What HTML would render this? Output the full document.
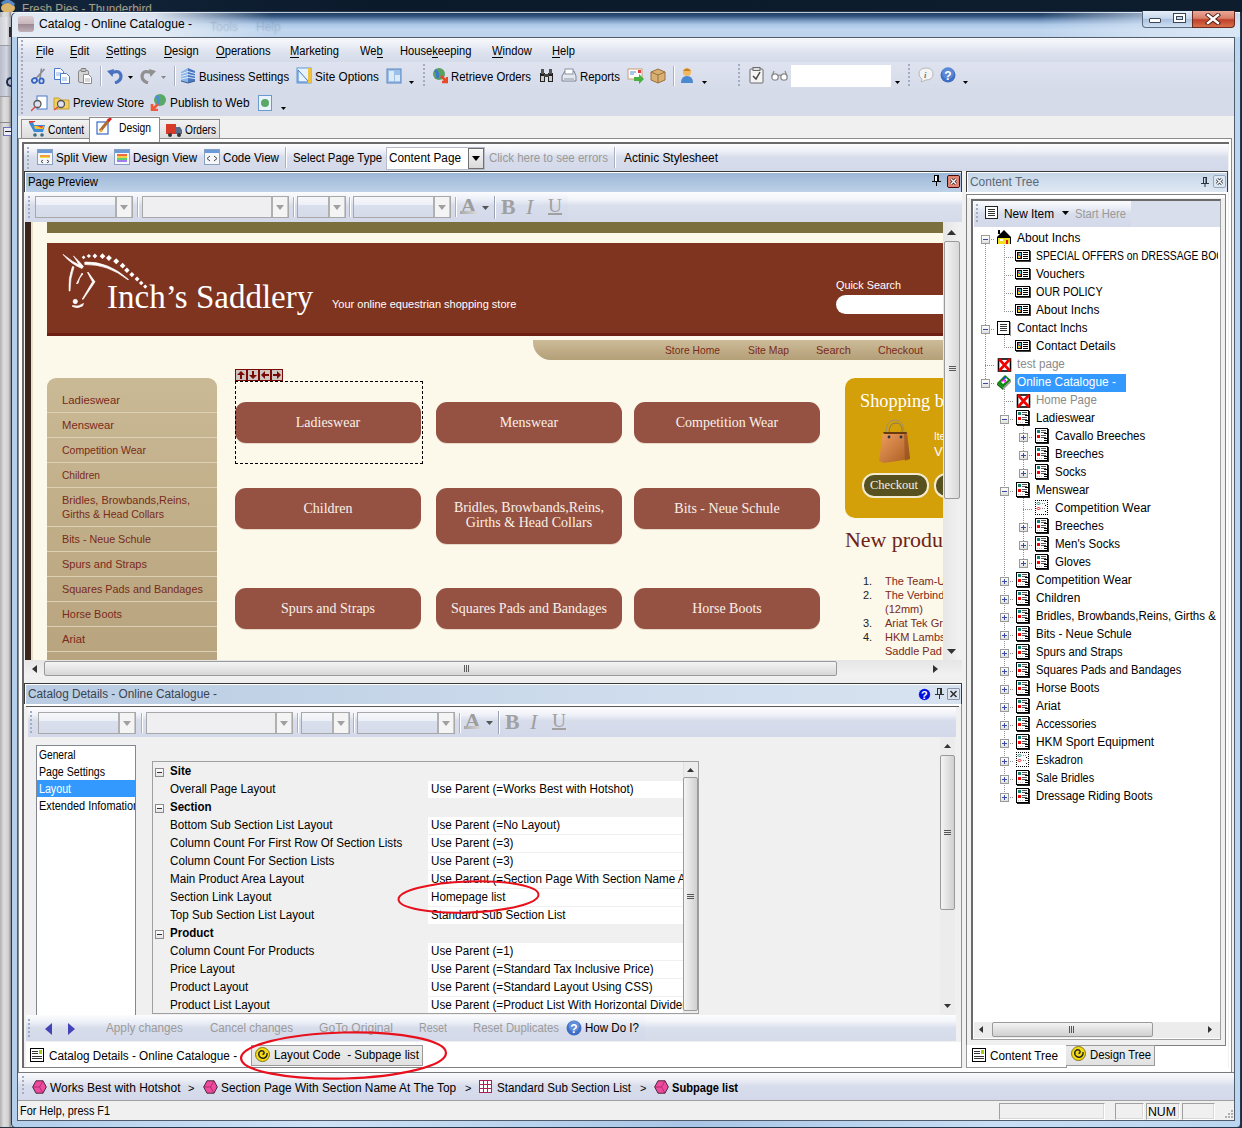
<!DOCTYPE html>
<html><head><meta charset="utf-8"><style>
*{margin:0;padding:0;box-sizing:border-box}
html,body{width:1242px;height:1128px;overflow:hidden}
body{position:relative;background:#cfd3d8;font-family:"Liberation Sans",sans-serif;font-size:12px;color:#000}
.a{position:absolute}
.t{position:absolute;white-space:nowrap;transform-origin:0 0}
.lav{background:linear-gradient(#fbfcfe 0,#eef1f8 20%,#dde2ef 45%,#d4d9ea 100%)}
.dock{background:#d6dbe9}
.cap{background:linear-gradient(#98b4d4 0,#a8c0dc 35%,#c0d3e8 100%)}
.capi{background:linear-gradient(#d4e0ee 0,#c9d8ea 50%,#dbe6f2 100%)}
.grip{background:repeating-linear-gradient(#9aa4b8 0 2px,transparent 2px 4px)}
</style></head><body>
<div class="a" style="left:0px;top:0px;width:1242px;height:12px;background:linear-gradient(90deg,#13263c,#0b1a2b 30%,#0d1c2d 70%,#0e1d2e)"></div>
<svg class="a" style="left:0px;top:0px;" width="16" height="13" viewBox="0 0 16 13"><ellipse cx="8" cy="8" rx="7" ry="5" fill="#d9b46a"/><path d="M2 4 Q8 -2 14 5" stroke="#5a8ac8" stroke-width="3" fill="none"/></svg>
<div class="t" style="left:22px;top:2px;font-size:13px;line-height:13px;font-family:'Liberation Sans',sans-serif;color:#a49c84;transform:scaleX(0.905);text-shadow:0 0 2px #2a3a4a">Fresh Pies - Thunderbird</div>
<div class="a" style="left:0px;top:12px;width:11px;height:1116px;background:linear-gradient(90deg,#b0b0b0 0,#dedede 35%,#d2d2d2 75%,#8a8a8a 100%)"></div>
<div class="a" style="left:0px;top:17px;width:11px;height:28px;background:linear-gradient(90deg,#cfd0d6,#e4e5ea 60%,#a8a9b0)"></div>
<div class="a" style="left:9px;top:27px;width:2px;height:10px;background:#2a2a30"></div>
<div class="a" style="left:0px;top:45px;width:11px;height:1px;background:#9a9aa0"></div>
<div class="a" style="left:0px;top:46px;width:11px;height:50px;background:linear-gradient(90deg,#b8bcc8,#d2d6e2 60%,#9ca0ac)"></div>
<div class="a" style="left:6px;top:77px;width:5px;height:10px;border:2px solid #1a2a50;border-right:none;border-radius:5px 0 0 5px"></div>
<div class="a" style="left:0px;top:96px;width:11px;height:1px;background:#9a9aa0"></div>
<div class="a" style="left:0px;top:122px;width:11px;height:1px;background:#8a8a8a"></div>
<div class="a" style="left:3px;top:127px;width:9px;height:9px;border:1px solid #7070c0;background:#ececf6"></div>
<div class="a" style="left:5px;top:131px;width:6px;height:1px;background:#222"></div>
<div class="a" style="left:1240px;top:12px;width:2px;height:1116px;background:#1e2b39"></div>
<div class="a" style="left:0px;top:1127px;width:1242px;height:1px;background:#2a3440"></div>
<div class="a" style="left:11px;top:11px;width:1230px;height:1117px;border-radius:7px 7px 4px 4px;background:linear-gradient(90deg,#b4cfec 0,#cfe3f6 25%,#a9c6e6 55%,#c9def4 80%,#bcd6f0 100%);border:1px solid #23384f"></div>
<div class="a" style="left:12px;top:12px;width:1228px;height:25px;border-radius:6px 6px 0 0;background:linear-gradient(#1c3a5e 0,#2e5078 16%,#7898c0 34%,#aac6e6 50%,#bcd4ee 72%,#b2cbe9 100%)"></div>
<div class="a" style="left:12px;top:12px;width:260px;height:25px;border-radius:6px 0 0 0;background:linear-gradient(90deg,rgba(226,234,244,1) 0,rgba(226,234,244,.95) 55%,rgba(226,234,244,0) 100%)"></div>
<div class="a" style="left:12px;top:24px;width:1228px;height:13px;background:linear-gradient(rgba(255,255,255,0),rgba(255,255,255,.15))"></div>
<div class="a" style="left:1040px;top:12px;width:200px;height:25px;background:linear-gradient(90deg,rgba(220,232,246,0) 0,rgba(220,232,246,.7) 60%,rgba(220,232,246,.9) 100%)"></div>
<div class="a" style="left:12px;top:12px;width:1228px;height:1px;background:rgba(255,255,255,.7)"></div>
<div class="t" style="left:210px;top:21px;font-size:12px;line-height:12px;font-family:'Liberation Sans',sans-serif;color:rgba(60,80,110,.07);text-shadow:0 0 2px rgba(60,80,110,.2)">Tools</div>
<div class="t" style="left:256px;top:21px;font-size:12px;line-height:12px;font-family:'Liberation Sans',sans-serif;color:rgba(60,80,110,.07);text-shadow:0 0 2px rgba(60,80,110,.2)">Help</div>
<div class="a" style="left:18px;top:16px;width:16px;height:16px;border-radius:3px;background:linear-gradient(#dcd0d4,#c8b6bc 50%,#9c8890 51%,#c0b0b8)"></div>
<div class="t" style="left:39px;top:18px;font-size:12px;line-height:12px;font-family:'Liberation Sans',sans-serif;color:#000;transform:scaleX(1.006);">Catalog - Online Catalogue -</div>
<div class="a" style="left:1142px;top:11px;width:25px;height:17px;border:1px solid #5a6a80;border-top:none;border-radius:0 0 0 4px;background:linear-gradient(#e6eef8,#c2d4ea 50%,#a9c0de 51%,#cfe0f2)"></div>
<div class="a" style="left:1149px;top:18px;width:12px;height:5px;background:#fff;border:1px solid #3a4656;border-radius:1px"></div>
<div class="a" style="left:1166px;top:11px;width:27px;height:17px;border:1px solid #5a6a80;border-top:none;border-left:none;background:linear-gradient(#e6eef8,#c2d4ea 50%,#a9c0de 51%,#cfe0f2)"></div>
<div class="a" style="left:1173px;top:13px;width:13px;height:10px;border:1px solid #3a4656;background:#fff;box-shadow:inset 0 0 0 2px #fff"></div>
<div class="a" style="left:1176px;top:16px;width:7px;height:4px;border:1px solid #3a4656;background:#c8d8ec"></div>
<div class="a" style="left:1192px;top:11px;width:43px;height:17px;border:1px solid #6a2a20;border-top:none;border-radius:0 0 4px 0;background:linear-gradient(#eaa898,#d8806a 45%,#c0402a 55%,#d8704a)"></div>
<svg class="a" style="left:1205px;top:13px;" width="16" height="12" viewBox="0 0 16 12"><path d="M3 2 L13 10 M13 2 L3 10" stroke="#4a1a10" stroke-width="4.2" stroke-linecap="square"/><path d="M3 2 L13 10 M13 2 L3 10" stroke="#fff" stroke-width="2.4" stroke-linecap="square"/></svg>
<div class="a" style="left:17px;top:37px;width:1218px;height:1084px;background:#f0f0f0;border:1px solid #4e5c6c"></div>
<div class="a" style="left:18px;top:38px;width:1216px;height:78px;background:#d6dbe9"></div>
<div class="a" style="left:18px;top:38px;width:1216px;height:3px;background:linear-gradient(#fbfbfd,#e6e9f2)"></div>
<div class="a" style="left:18px;top:40px;width:1216px;height:22px;background:linear-gradient(#f6f7fb,#dce1ee 60%,#d6dbe9)"></div>
<div class="a" style="left:21px;top:40px;width:2px;height:2px;background:#a3acc0"></div>
<div class="a" style="left:21px;top:44px;width:2px;height:2px;background:#a3acc0"></div>
<div class="a" style="left:21px;top:48px;width:2px;height:2px;background:#a3acc0"></div>
<div class="a" style="left:21px;top:52px;width:2px;height:2px;background:#a3acc0"></div>
<div class="a" style="left:21px;top:56px;width:2px;height:2px;background:#a3acc0"></div>
<div class="a" style="left:21px;top:60px;width:2px;height:2px;background:#a3acc0"></div>
<div class="a" style="left:21px;top:64px;width:2px;height:2px;background:#a3acc0"></div>
<div class="a" style="left:21px;top:68px;width:2px;height:2px;background:#a3acc0"></div>
<div class="a" style="left:21px;top:72px;width:2px;height:2px;background:#a3acc0"></div>
<div class="a" style="left:21px;top:76px;width:2px;height:2px;background:#a3acc0"></div>
<div class="a" style="left:21px;top:80px;width:2px;height:2px;background:#a3acc0"></div>
<div class="a" style="left:21px;top:84px;width:2px;height:2px;background:#a3acc0"></div>
<div class="a" style="left:21px;top:88px;width:2px;height:2px;background:#a3acc0"></div>
<div class="a" style="left:21px;top:92px;width:2px;height:2px;background:#a3acc0"></div>
<div class="a" style="left:21px;top:96px;width:2px;height:2px;background:#a3acc0"></div>
<div class="a" style="left:21px;top:100px;width:2px;height:2px;background:#a3acc0"></div>
<div class="a" style="left:21px;top:104px;width:2px;height:2px;background:#a3acc0"></div>
<div class="a" style="left:21px;top:108px;width:2px;height:2px;background:#a3acc0"></div>
<div class="a" style="left:21px;top:112px;width:2px;height:2px;background:#a3acc0"></div>
<div class="t" style="left:36px;top:45px;font-size:12px;line-height:12px;font-family:'Liberation Sans',sans-serif;color:#000;transform:scaleX(0.930);">File</div>
<div class="a" style="left:36px;top:57px;width:7px;height:1px;background:#000"></div>
<div class="t" style="left:70px;top:45px;font-size:12px;line-height:12px;font-family:'Liberation Sans',sans-serif;color:#000;transform:scaleX(0.930);">Edit</div>
<div class="a" style="left:70px;top:57px;width:7px;height:1px;background:#000"></div>
<div class="t" style="left:106px;top:45px;font-size:12px;line-height:12px;font-family:'Liberation Sans',sans-serif;color:#000;transform:scaleX(0.930);">Settings</div>
<div class="a" style="left:106px;top:57px;width:7px;height:1px;background:#000"></div>
<div class="t" style="left:164px;top:45px;font-size:12px;line-height:12px;font-family:'Liberation Sans',sans-serif;color:#000;transform:scaleX(0.930);">Design</div>
<div class="a" style="left:164px;top:57px;width:8px;height:1px;background:#000"></div>
<div class="t" style="left:216px;top:45px;font-size:12px;line-height:12px;font-family:'Liberation Sans',sans-serif;color:#000;transform:scaleX(0.930);">Operations</div>
<div class="a" style="left:216px;top:57px;width:9px;height:1px;background:#000"></div>
<div class="t" style="left:290px;top:45px;font-size:12px;line-height:12px;font-family:'Liberation Sans',sans-serif;color:#000;transform:scaleX(0.930);">Marketing</div>
<div class="a" style="left:290px;top:57px;width:9px;height:1px;background:#000"></div>
<div class="t" style="left:360px;top:45px;font-size:12px;line-height:12px;font-family:'Liberation Sans',sans-serif;color:#000;transform:scaleX(0.930);">Web</div>
<div class="a" style="left:377px;top:57px;width:6px;height:1px;background:#000"></div>
<div class="t" style="left:400px;top:45px;font-size:12px;line-height:12px;font-family:'Liberation Sans',sans-serif;color:#000;transform:scaleX(0.930);">Housekeeping</div>
<div class="a" style="left:432px;top:57px;width:6px;height:1px;background:#000"></div>
<div class="t" style="left:492px;top:45px;font-size:12px;line-height:12px;font-family:'Liberation Sans',sans-serif;color:#000;transform:scaleX(0.930);">Window</div>
<div class="a" style="left:492px;top:57px;width:11px;height:1px;background:#000"></div>
<div class="t" style="left:552px;top:45px;font-size:12px;line-height:12px;font-family:'Liberation Sans',sans-serif;color:#000;transform:scaleX(0.930);">Help</div>
<div class="a" style="left:552px;top:57px;width:8px;height:1px;background:#000"></div>
<div class="a" style="left:18px;top:62px;width:1216px;height:28px;background:linear-gradient(#dfe3f0,#d6dbe9)"></div>
<svg class="a" style="left:31px;top:68px;" width="15" height="16" viewBox="0 0 15 16"><path d="M5.5 10 L13.5 1 M9 10 L10.5 0.5" stroke="#8a8a90" stroke-width="1.6"/><ellipse cx="3.5" cy="12.5" rx="2.6" ry="2.2" stroke="#3564c0" stroke-width="1.8" fill="none" transform="rotate(-30 3.5 12.5)"/><ellipse cx="10.5" cy="13" rx="2.2" ry="2.6" stroke="#3564c0" stroke-width="1.8" fill="none"/></svg>
<svg class="a" style="left:54px;top:68px;" width="16" height="16" viewBox="0 0 16 16"><path d="M.5 .5h6l3 3v8h-9z" fill="#fff" stroke="#4a7ac8"/><path d="M2 5h5M2 7h5" stroke="#8ab0e0"/><path d="M6.5 5.5h6l3 3v7h-9z" fill="#fff" stroke="#4a7ac8"/><path d="M8 10h5M8 12h5" stroke="#8ab0e0"/></svg>
<svg class="a" style="left:78px;top:68px;" width="15" height="16" viewBox="0 0 15 16"><rect x=".5" y="2.5" width="10" height="12" rx="1.5" fill="#d4d4d4" stroke="#8a8a8a"/><rect x="3" y=".5" width="5" height="3" rx="1" fill="#c4c4c4" stroke="#7a7a7a"/><path d="M5.5 6.5h5l3 3v6h-8z" fill="#fff" stroke="#8a8a8a"/><path d="M7 11h5M7 13h5" stroke="#b0b0b0"/></svg>
<div class="a" style="left:100px;top:66px;width:1px;height:20px;background:#a8b0c2;box-shadow:1px 0 #fff"></div>
<svg class="a" style="left:107px;top:68px;" width="16" height="16" viewBox="0 0 16 16"><path d="M4 5 Q13 1 14 8 Q14 13 8 15" stroke="#4a72c0" stroke-width="3.2" fill="none"/><path d="M0 3 L7 1 L5.5 9z" fill="#4a72c0"/></svg>
<svg class="a" style="left:128px;top:76px;" width="5" height="3" viewBox="0 0 5 3"><path d="M0 0h5l-2.5 3z" fill="#000"/></svg>
<svg class="a" style="left:140px;top:68px;" width="16" height="16" viewBox="0 0 16 16"><path d="M12 5 Q3 1 2 8 Q2 13 8 15" stroke="#909090" stroke-width="3.2" fill="none"/><path d="M16 3 L9 1 L10.5 9z" fill="#909090"/></svg>
<svg class="a" style="left:161px;top:76px;" width="5" height="3" viewBox="0 0 5 3"><path d="M0 0h5l-2.5 3z" fill="#888"/></svg>
<div class="a" style="left:174px;top:66px;width:1px;height:20px;background:#a8b0c2;box-shadow:1px 0 #fff"></div>
<svg class="a" style="left:180px;top:67px;" width="16" height="17" viewBox="0 0 16 17"><path d="M1 5 L8 1 L8 16 L1 14z" fill="#8ab4e8"/><path d="M8 1 L15 4 L15 14 L8 16z" fill="#4a78c0"/><path d="M1 7 L8 4.5 M1 9.5 L8 7.5 M1 12 L8 10.5 M8 4.5 L15 6.5 M8 7.5 L15 9 M8 10.5 L15 11.5" stroke="#e8f2fc" stroke-width=".9"/><path d="M1 14 L8 16 L15 14" stroke="#3a5a90" stroke-width="1" fill="none"/></svg>
<div class="t" style="left:199px;top:71px;font-size:12px;line-height:12px;font-family:'Liberation Sans',sans-serif;color:#000;transform:scaleX(0.944);">Business Settings</div>
<svg class="a" style="left:296px;top:67px;" width="16" height="17" viewBox="0 0 16 17"><rect x="1" y="1" width="14" height="15" fill="#e8f2fc" stroke="#5a9ad8"/><path d="M2 15 L2 3 L13 15z" fill="none" stroke="#3a7ac8"/><rect x="12" y="1" width="3" height="15" fill="#f0c040"/></svg>
<div class="t" style="left:315px;top:71px;font-size:12px;line-height:12px;font-family:'Liberation Sans',sans-serif;color:#000;transform:scaleX(0.979);">Site Options</div>
<svg class="a" style="left:386px;top:68px;" width="16" height="16" viewBox="0 0 16 16"><rect x="1" y="1" width="14" height="14" fill="#9cc0e8" stroke="#5a86c0"/><rect x="3" y="3" width="5" height="10" fill="#dceaf8"/><rect x="9" y="7" width="5" height="6" fill="#dceaf8"/></svg>
<svg class="a" style="left:409px;top:81px;" width="5" height="3" viewBox="0 0 5 3"><path d="M0 0h5l-2.5 3z" fill="#000"/></svg>
<div class="a" style="left:423px;top:64px;width:2px;height:2px;background:#a3acc0"></div>
<div class="a" style="left:423px;top:68px;width:2px;height:2px;background:#a3acc0"></div>
<div class="a" style="left:423px;top:72px;width:2px;height:2px;background:#a3acc0"></div>
<div class="a" style="left:423px;top:76px;width:2px;height:2px;background:#a3acc0"></div>
<div class="a" style="left:423px;top:80px;width:2px;height:2px;background:#a3acc0"></div>
<div class="a" style="left:423px;top:84px;width:2px;height:2px;background:#a3acc0"></div>
<svg class="a" style="left:432px;top:67px;" width="16" height="17" viewBox="0 0 16 17"><circle cx="7" cy="7" r="6" fill="#5aa060"/><path d="M3 3 Q7 6 5 11" stroke="#3a78c8" stroke-width="3" fill="none"/><path d="M9 9 L15 15 M15 10 V15 H10" stroke="#e84a28" stroke-width="2.5" fill="none"/></svg>
<div class="t" style="left:451px;top:71px;font-size:12px;line-height:12px;font-family:'Liberation Sans',sans-serif;color:#000;transform:scaleX(0.945);">Retrieve Orders</div>
<svg class="a" style="left:539px;top:68px;" width="15" height="15" viewBox="0 0 15 15"><rect x="1" y="5" width="5" height="9" fill="#222"/><rect x="9" y="5" width="5" height="9" fill="#222"/><rect x="2" y="1" width="3" height="5" fill="#555"/><rect x="10" y="1" width="3" height="5" fill="#555"/><rect x="5" y="6" width="5" height="3" fill="#444"/><rect x="2" y="8" width="3" height="5" fill="#ccc"/><rect x="10" y="8" width="3" height="5" fill="#ccc"/></svg>
<svg class="a" style="left:561px;top:68px;" width="16" height="16" viewBox="0 0 16 16"><path d="M1 8 L4 3 H13 L15 8 V13 H1z" fill="#e4e8ee" stroke="#7a8292"/><rect x="4" y="1" width="8" height="5" fill="#fff" stroke="#8a92a2"/><rect x="3" y="10" width="10" height="3" fill="#b8c0cc"/></svg>
<div class="t" style="left:580px;top:71px;font-size:12px;line-height:12px;font-family:'Liberation Sans',sans-serif;color:#000;transform:scaleX(0.952);">Reports</div>
<svg class="a" style="left:627px;top:67px;" width="17" height="17" viewBox="0 0 17 17"><rect x="1" y="2" width="14" height="10" fill="#fff" stroke="#c8a070"/><path d="M3 5h6M3 7h4" stroke="#5a8ad0"/><rect x="11" y="3" width="3" height="3" fill="#e04040"/><path d="M7 10h5v-3l5 5-5 5v-3H7z" fill="#4ab040"/></svg>
<svg class="a" style="left:650px;top:68px;" width="16" height="16" viewBox="0 0 16 16"><path d="M1 4 L8 1 L15 4 V12 L8 15 L1 12z" fill="#d8b070" stroke="#9a7040"/><path d="M1 4 L8 7 L15 4 M8 7 V15" stroke="#9a7040" fill="none"/></svg>
<div class="a" style="left:673px;top:66px;width:1px;height:20px;background:#a8b0c2;box-shadow:1px 0 #fff"></div>
<svg class="a" style="left:680px;top:67px;" width="14" height="17" viewBox="0 0 14 17"><circle cx="7" cy="5" r="4" fill="#f0b860"/><path d="M3 4 Q7 -1 11 4" fill="#c88020"/><path d="M1 16 Q1 9 7 9 Q13 9 13 16z" fill="#4a88d0"/></svg>
<svg class="a" style="left:702px;top:81px;" width="5" height="3" viewBox="0 0 5 3"><path d="M0 0h5l-2.5 3z" fill="#000"/></svg>
<div class="a" style="left:738px;top:64px;width:2px;height:2px;background:#a3acc0"></div>
<div class="a" style="left:738px;top:68px;width:2px;height:2px;background:#a3acc0"></div>
<div class="a" style="left:738px;top:72px;width:2px;height:2px;background:#a3acc0"></div>
<div class="a" style="left:738px;top:76px;width:2px;height:2px;background:#a3acc0"></div>
<div class="a" style="left:738px;top:80px;width:2px;height:2px;background:#a3acc0"></div>
<div class="a" style="left:738px;top:84px;width:2px;height:2px;background:#a3acc0"></div>
<svg class="a" style="left:749px;top:67px;" width="15" height="17" viewBox="0 0 15 17"><rect x="1" y="2" width="13" height="14" rx="1" fill="#f4f4f4" stroke="#6a6a6a"/><rect x="4" y="0.5" width="7" height="3" fill="#ddd" stroke="#6a6a6a"/><path d="M4 9 L7 12 L11 5" stroke="#444" stroke-width="1.5" fill="none"/></svg>
<svg class="a" style="left:771px;top:70px;" width="17" height="12" viewBox="0 0 17 12"><circle cx="4" cy="7" r="3.2" stroke="#8a8a8a" stroke-width="1.3" fill="#fff"/><circle cx="13" cy="7" r="3.2" stroke="#8a8a8a" stroke-width="1.3" fill="#fff"/><path d="M7 6 Q8.5 4 10 6 M1 6 L3 1 M16 6 L14 1" stroke="#8a8a8a" stroke-width="1.2" fill="none"/></svg>
<div class="a" style="left:791px;top:65px;width:100px;height:22px;background:#fff"></div>
<svg class="a" style="left:895px;top:81px;" width="5" height="3" viewBox="0 0 5 3"><path d="M0 0h5l-2.5 3z" fill="#000"/></svg>
<div class="a" style="left:908px;top:64px;width:2px;height:2px;background:#a3acc0"></div>
<div class="a" style="left:908px;top:68px;width:2px;height:2px;background:#a3acc0"></div>
<div class="a" style="left:908px;top:72px;width:2px;height:2px;background:#a3acc0"></div>
<div class="a" style="left:908px;top:76px;width:2px;height:2px;background:#a3acc0"></div>
<div class="a" style="left:908px;top:80px;width:2px;height:2px;background:#a3acc0"></div>
<div class="a" style="left:908px;top:84px;width:2px;height:2px;background:#a3acc0"></div>
<svg class="a" style="left:918px;top:67px;" width="16" height="16" viewBox="0 0 16 16"><path d="M8 1 Q15 1 15 7 Q15 13 8 13 L3 15 L4 12 Q1 10 1 7 Q1 1 8 1z" fill="#f4f4f4" stroke="#b8b8b8"/><text x="6" y="11" font-size="9" font-style="italic" font-weight="bold" fill="#777" font-family="Liberation Serif">i</text></svg>
<svg class="a" style="left:940px;top:67px;" width="16" height="16" viewBox="0 0 16 16"><circle cx="8" cy="8" r="7.5" fill="#3f6fc4"/><circle cx="8" cy="6" r="6" fill="#6f9ae0" opacity=".6"/><text x="4.3" y="12.5" font-size="12" font-weight="bold" fill="#fff" font-family="Liberation Sans">?</text></svg>
<svg class="a" style="left:963px;top:81px;" width="5" height="3" viewBox="0 0 5 3"><path d="M0 0h5l-2.5 3z" fill="#000"/></svg>
<div class="a" style="left:18px;top:90px;width:1216px;height:26px;background:#d6dbe9"></div>
<div class="a" style="left:21px;top:40px;width:2px;height:2px;background:#a3acc0"></div>
<div class="a" style="left:21px;top:44px;width:2px;height:2px;background:#a3acc0"></div>
<div class="a" style="left:21px;top:48px;width:2px;height:2px;background:#a3acc0"></div>
<div class="a" style="left:21px;top:52px;width:2px;height:2px;background:#a3acc0"></div>
<div class="a" style="left:21px;top:56px;width:2px;height:2px;background:#a3acc0"></div>
<div class="a" style="left:21px;top:60px;width:2px;height:2px;background:#a3acc0"></div>
<div class="a" style="left:21px;top:64px;width:2px;height:2px;background:#a3acc0"></div>
<div class="a" style="left:21px;top:68px;width:2px;height:2px;background:#a3acc0"></div>
<div class="a" style="left:21px;top:72px;width:2px;height:2px;background:#a3acc0"></div>
<div class="a" style="left:21px;top:76px;width:2px;height:2px;background:#a3acc0"></div>
<div class="a" style="left:21px;top:80px;width:2px;height:2px;background:#a3acc0"></div>
<div class="a" style="left:21px;top:84px;width:2px;height:2px;background:#a3acc0"></div>
<div class="a" style="left:21px;top:88px;width:2px;height:2px;background:#a3acc0"></div>
<div class="a" style="left:21px;top:92px;width:2px;height:2px;background:#a3acc0"></div>
<div class="a" style="left:21px;top:96px;width:2px;height:2px;background:#a3acc0"></div>
<div class="a" style="left:21px;top:100px;width:2px;height:2px;background:#a3acc0"></div>
<div class="a" style="left:21px;top:104px;width:2px;height:2px;background:#a3acc0"></div>
<div class="a" style="left:21px;top:108px;width:2px;height:2px;background:#a3acc0"></div>
<div class="a" style="left:21px;top:112px;width:2px;height:2px;background:#a3acc0"></div>
<svg class="a" style="left:31px;top:95px;" width="17" height="17" viewBox="0 0 17 17"><rect x="6" y="1" width="10" height="13" fill="#fff" stroke="#4a7ac8"/><circle cx="6.5" cy="9" r="3.5" fill="#e0e0f0" stroke="#555" stroke-width="1.3"/><path d="M4 12 L0 16" stroke="#e04a4a" stroke-width="1.5"/></svg>
<svg class="a" style="left:53px;top:94px;" width="17" height="17" viewBox="0 0 17 17"><path d="M1 4 H6 L8 6 H16 V15 H1z" fill="#f0d060" stroke="#c8a030"/><circle cx="8" cy="10" r="3.5" fill="#e0e0f0" stroke="#555" stroke-width="1.3"/><path d="M5 13 L1 16" stroke="#e04a4a" stroke-width="1.5"/></svg>
<div class="t" style="left:73px;top:97px;font-size:12px;line-height:12px;font-family:'Liberation Sans',sans-serif;color:#000;transform:scaleX(0.951);">Preview Store</div>
<svg class="a" style="left:150px;top:93px;" width="17" height="18" viewBox="0 0 17 18"><circle cx="10" cy="7" r="6" fill="#5aa868"/><path d="M6 3 Q10 6 8 12" stroke="#4a90d8" stroke-width="3" fill="none"/><path d="M8 11 L2 17 M2 11 V17 H8" stroke="#f05a3a" stroke-width="2.6" fill="none"/></svg>
<div class="t" style="left:170px;top:97px;font-size:12px;line-height:12px;font-family:'Liberation Sans',sans-serif;color:#000;transform:scaleX(0.988);">Publish to Web</div>
<svg class="a" style="left:258px;top:95px;" width="14" height="16" viewBox="0 0 14 16"><rect x="0.5" y="0.5" width="13" height="15" fill="#eaf2fb" stroke="#6a9ad0"/><circle cx="7" cy="8" r="4" fill="#5aa868"/></svg>
<svg class="a" style="left:281px;top:107px;" width="5" height="3" viewBox="0 0 5 3"><path d="M0 0h5l-2.5 3z" fill="#000"/></svg>
<div class="a" style="left:18px;top:116px;width:1216px;height:27px;background:#f0f0f0"></div>
<div class="a" style="left:18px;top:138px;width:1214px;height:935px;border:1px solid #8c8c8c;background:#fff"></div>
<div class="a" style="left:22px;top:142px;width:1207px;height:926px;background:#f0f0f0;border-top:2px solid #6a6a6a;border-left:2px solid #6a6a6a"></div>
<div class="a" style="left:21px;top:119px;width:69px;height:19px;background:linear-gradient(#f2f2f2,#dcdcdc);border:1px solid #8d8d8d;border-bottom:none"></div>
<svg class="a" style="left:28px;top:121px;" width="18" height="16" viewBox="0 0 18 16"><path d="M1 2 L5 1 L6 4 H17 L15 11 H6z" fill="#3a8ad8"/><path d="M6 5 H16 L15 8 H7z" fill="#f8c030"/><path d="M9 5 L15 5 L14 7z" fill="#e04040"/><circle cx="7" cy="14" r="1.8" fill="#3a6a80"/><circle cx="14" cy="14" r="1.8" fill="#3a6a80"/><path d="M1 1 L7 0" stroke="#e03030" stroke-width="2"/></svg>
<div class="t" style="left:48px;top:124px;font-size:12px;line-height:12px;font-family:'Liberation Sans',sans-serif;color:#000;transform:scaleX(0.857);">Content</div>
<div class="a" style="left:89px;top:117px;width:71px;height:25px;background:#fff;border:1px solid #8d8d8d;border-bottom:none"></div>
<svg class="a" style="left:96px;top:118px;" width="16" height="17" viewBox="0 0 16 17"><rect x="1" y="4" width="11" height="12" fill="#fff" stroke="#3a6ac8" stroke-width="1.2"/><path d="M4 13 L13 2" stroke="#b06a30" stroke-width="3"/><path d="M12 3 L15 0" stroke="#e02020" stroke-width="3"/><path d="M3 15 L5 11 L7 13z" fill="#f0b040"/></svg>
<div class="t" style="left:119px;top:122px;font-size:12px;line-height:12px;font-family:'Liberation Sans',sans-serif;color:#000;transform:scaleX(0.857);">Design</div>
<div class="a" style="left:160px;top:119px;width:60px;height:19px;background:linear-gradient(#f2f2f2,#dcdcdc);border:1px solid #8d8d8d;border-bottom:none;border-left:none"></div>
<svg class="a" style="left:165px;top:122px;" width="18" height="15" viewBox="0 0 18 15"><rect x="1" y="2" width="10" height="10" fill="#d83a2a"/><path d="M11 5 H15 L17 8 V12 H11z" fill="#5a6a8a"/><circle cx="5" cy="13" r="2" fill="#333"/><circle cx="14" cy="13" r="2" fill="#333"/></svg>
<div class="t" style="left:185px;top:124px;font-size:12px;line-height:12px;font-family:'Liberation Sans',sans-serif;color:#000;transform:scaleX(0.845);">Orders</div>
<div class="a" style="left:24px;top:144px;width:1204px;height:27px;background:linear-gradient(#fdfdfe 0,#eef1f8 25%,#d8ddec 50%,#d4d9ea 100%)"></div>
<div class="a" style="left:27px;top:147px;width:2px;height:2px;background:#a3acc0"></div>
<div class="a" style="left:27px;top:151px;width:2px;height:2px;background:#a3acc0"></div>
<div class="a" style="left:27px;top:155px;width:2px;height:2px;background:#a3acc0"></div>
<div class="a" style="left:27px;top:159px;width:2px;height:2px;background:#a3acc0"></div>
<div class="a" style="left:27px;top:163px;width:2px;height:2px;background:#a3acc0"></div>
<div class="a" style="left:27px;top:167px;width:2px;height:2px;background:#a3acc0"></div>
<svg class="a" style="left:37px;top:149px;" width="16" height="16" viewBox="0 0 16 16"><rect x="0.5" y="0.5" width="15" height="15" fill="#f4f6fa" stroke="#8aa0c0"/><rect x="1" y="1" width="14" height="3" fill="#6a9ad8"/><rect x="3" y="6" width="10" height="2" fill="#f0a040"/><rect x="3" y="8" width="10" height="1" fill="#f0e040"/><path d="M6 11 L4 12.5 L6 14 M10 11 L12 12.5 L10 14" stroke="#444" fill="none"/></svg>
<div class="t" style="left:56px;top:152px;font-size:12px;line-height:12px;font-family:'Liberation Sans',sans-serif;color:#000;transform:scaleX(0.972);">Split View</div>
<svg class="a" style="left:114px;top:149px;" width="16" height="16" viewBox="0 0 16 16"><rect x="0.5" y="0.5" width="15" height="15" fill="#f4f6fa" stroke="#8aa0c0"/><rect x="1" y="1" width="14" height="3" fill="#6a9ad8"/><rect x="3" y="5" width="10" height="2" fill="#f06a40"/><rect x="3" y="7" width="10" height="2" fill="#f0d040"/><rect x="3" y="9" width="10" height="2" fill="#60d070"/><rect x="3" y="11" width="10" height="2" fill="#a080f0"/></svg>
<div class="t" style="left:133px;top:152px;font-size:12px;line-height:12px;font-family:'Liberation Sans',sans-serif;color:#000;transform:scaleX(0.963);">Design View</div>
<svg class="a" style="left:204px;top:149px;" width="16" height="16" viewBox="0 0 16 16"><rect x="0.5" y="0.5" width="15" height="15" fill="#f4f6fa" stroke="#8aa0c0"/><rect x="1" y="1" width="14" height="3" fill="#6a9ad8"/><path d="M6 7 L3 9.5 L6 12 M10 7 L13 9.5 L10 12" stroke="#444" fill="none"/></svg>
<div class="t" style="left:223px;top:152px;font-size:12px;line-height:12px;font-family:'Liberation Sans',sans-serif;color:#000;transform:scaleX(0.969);">Code View</div>
<div class="a" style="left:285px;top:147px;width:1px;height:21px;background:#a8b0c2;box-shadow:1px 0 #fff"></div>
<div class="t" style="left:293px;top:152px;font-size:12px;line-height:12px;font-family:'Liberation Sans',sans-serif;color:#000;transform:scaleX(0.949);">Select Page Type</div>
<div class="a" style="left:386px;top:147px;width:99px;height:23px;background:#fff;border:1px solid #b8bcc8"></div>
<div class="t" style="left:389px;top:152px;font-size:12px;line-height:12px;font-family:'Liberation Sans',sans-serif;color:#000;transform:scaleX(0.981);">Content Page</div>
<div class="a" style="left:468px;top:148px;width:16px;height:21px;background:linear-gradient(#f8f8f8,#dadada);border:1px solid #707070"></div>
<svg class="a" style="left:472px;top:156px;" width="8" height="5" viewBox="0 0 8 5"><path d="M0 0h8l-4 5z" fill="#000"/></svg>
<div class="t" style="left:489px;top:152px;font-size:12px;line-height:12px;font-family:'Liberation Sans',sans-serif;color:#9a9a9a;transform:scaleX(0.959);">Click here to see errors</div>
<div class="a" style="left:614px;top:147px;width:1px;height:21px;background:#a8b0c2;box-shadow:1px 0 #fff"></div>
<div class="t" style="left:624px;top:152px;font-size:12px;line-height:12px;font-family:'Liberation Sans',sans-serif;color:#000;transform:scaleX(0.993);">Actinic Stylesheet</div>
<div class="a" style="left:24px;top:171px;width:938px;height:21px;background:linear-gradient(#9ab5d5 0,#a9c1dd 40%,#bdd1e7 100%);border:1px solid #3a3a3a;border-bottom:none;box-shadow:inset 1px 1px #fff"></div>
<div class="t" style="left:28px;top:176px;font-size:12px;line-height:12px;font-family:'Liberation Sans',sans-serif;color:#000;transform:scaleX(0.946);">Page Preview</div>
<svg class="a" style="left:932px;top:175px;" width="9" height="11" viewBox="0 0 9 11"><path d="M2 0h5v6h2v1H5v4H4V7H0V6h2z" fill="#000"/><rect x="3" y="1" width="2" height="5" fill="#fff"/></svg>
<div class="a" style="left:947px;top:175px;width:13px;height:13px;border:1px solid #4a0a0a;background:radial-gradient(#f8c8b8,#e07a68 70%,#f0a898);border-radius:2px"></div>
<svg class="a" style="left:949px;top:177px;" width="9" height="9" viewBox="0 0 9 9"><path d="M2 2l5 5M7 2l-5 5" stroke="#3a1a1a" stroke-width="3"/><path d="M2 2l5 5M7 2l-5 5" stroke="#fff" stroke-width="1.4"/></svg>
<div class="a" style="left:25px;top:192px;width:937px;height:30px;background:linear-gradient(#fdfdfe 0,#f2f4f9 25%,#dadfed 45%,#d6dbea 100%)"></div>
<div class="a" style="left:25px;top:192px;width:543px;height:30px;background:linear-gradient(#fbfcfe 0,#eceff7 25%,#d8ddec 45%,#d3d9ea 100%)"></div>
<div class="a" style="left:28px;top:196px;width:2px;height:2px;background:#a3acc0"></div>
<div class="a" style="left:28px;top:200px;width:2px;height:2px;background:#a3acc0"></div>
<div class="a" style="left:28px;top:204px;width:2px;height:2px;background:#a3acc0"></div>
<div class="a" style="left:28px;top:208px;width:2px;height:2px;background:#a3acc0"></div>
<div class="a" style="left:28px;top:212px;width:2px;height:2px;background:#a3acc0"></div>
<div class="a" style="left:28px;top:216px;width:2px;height:2px;background:#a3acc0"></div>
<div class="a" style="left:35px;top:196px;width:98px;height:22px;background:linear-gradient(#f6f7fb 0,#eef0f7 38%,#dadfed 42%,#d6dbea 100%);border:1px solid #a8a8a8"></div>
<div class="a" style="left:115px;top:197px;width:17px;height:20px;background:#f4f4f4;border-left:2px solid #b0b0b0;border-right:1px solid #c8c8c8"></div>
<svg class="a" style="left:120px;top:205px;" width="8" height="5" viewBox="0 0 8 5"><path d="M0 0h8l-4 5z" fill="#a0a0a0"/></svg>
<div class="a" style="left:137px;top:197px;width:1px;height:20px;background:#a8b0c2;box-shadow:1px 0 #fff"></div>
<div class="a" style="left:142px;top:196px;width:147px;height:22px;background:#efeff1;border:1px solid #a8a8a8"></div>
<div class="a" style="left:271px;top:197px;width:17px;height:20px;background:#f4f4f4;border-left:2px solid #b0b0b0;border-right:1px solid #c8c8c8"></div>
<svg class="a" style="left:276px;top:205px;" width="8" height="5" viewBox="0 0 8 5"><path d="M0 0h8l-4 5z" fill="#a0a0a0"/></svg>
<div class="a" style="left:293px;top:197px;width:1px;height:20px;background:#a8b0c2;box-shadow:1px 0 #fff"></div>
<div class="a" style="left:297px;top:196px;width:49px;height:22px;background:linear-gradient(#f6f7fb 0,#eef0f7 38%,#dadfed 42%,#d6dbea 100%);border:1px solid #a8a8a8"></div>
<div class="a" style="left:328px;top:197px;width:17px;height:20px;background:#f4f4f4;border-left:2px solid #b0b0b0;border-right:1px solid #c8c8c8"></div>
<svg class="a" style="left:333px;top:205px;" width="8" height="5" viewBox="0 0 8 5"><path d="M0 0h8l-4 5z" fill="#a0a0a0"/></svg>
<div class="a" style="left:349px;top:197px;width:1px;height:20px;background:#a8b0c2;box-shadow:1px 0 #fff"></div>
<div class="a" style="left:353px;top:196px;width:98px;height:22px;background:linear-gradient(#f6f7fb 0,#eef0f7 38%,#dadfed 42%,#d6dbea 100%);border:1px solid #a8a8a8"></div>
<div class="a" style="left:433px;top:197px;width:17px;height:20px;background:#f4f4f4;border-left:2px solid #b0b0b0;border-right:1px solid #c8c8c8"></div>
<svg class="a" style="left:438px;top:205px;" width="8" height="5" viewBox="0 0 8 5"><path d="M0 0h8l-4 5z" fill="#a0a0a0"/></svg>
<div class="a" style="left:455px;top:197px;width:1px;height:20px;background:#a8b0c2;box-shadow:1px 0 #fff"></div>
<div class="t" style="left:461px;top:197px;font-size:18px;line-height:18px;font-family:'Liberation Serif',serif;color:#9c9c9c;font-weight:bold;transform:scaleX(1.154);">A</div>
<div class="a" style="left:460px;top:211px;width:17px;height:3px;background:linear-gradient(90deg,#a8a8a8,#d8d8d8)"></div>
<svg class="a" style="left:482px;top:206px;" width="7" height="4" viewBox="0 0 7 4"><path d="M0 0h7l-3.5 4z" fill="#555"/></svg>
<div class="a" style="left:494px;top:196px;width:1px;height:23px;background:#9aa2b4;box-shadow:1px 0 #fff"></div>
<div class="t" style="left:501px;top:197px;font-size:20px;line-height:20px;font-family:'Liberation Serif',serif;color:#a0a0a0;font-weight:bold;transform:scaleX(1.087);">B</div>
<div class="t" style="left:526px;top:197px;font-size:20px;line-height:20px;font-family:'Liberation Serif',serif;color:#a0a0a0;transform:scaleX(1.100);font-style:italic">I</div>
<div class="t" style="left:548px;top:197px;font-size:18px;line-height:18px;font-family:'Liberation Serif',serif;color:#a0a0a0;transform:scaleX(1.077);">U</div>
<div class="a" style="left:548px;top:213px;width:14px;height:2px;background:#a0a0a0"></div>
<div class="a" style="left:25px;top:222px;width:918px;height:438px;background:#fcf8ea"></div>
<div class="a" style="left:25px;top:222px;width:6px;height:438px;background:#3a261c"></div>
<div class="a" style="left:31px;top:222px;width:2px;height:438px;background:#e8e0cc"></div>
<div class="a" style="left:47px;top:222px;width:896px;height:11px;background:#7b6f3e"></div>
<div class="a" style="left:47px;top:243px;width:896px;height:93px;background:#7f3420;border-bottom:3px solid #6c1f12"></div>
<svg class="a" style="left:58px;top:250px;" width="95" height="62" viewBox="0 0 95 62"><g fill="#fff" stroke="#fff" stroke-width=".7" stroke-linejoin="round"><path d="M5 4.4 Q14 12 25 17 L24 18.5 Q13 14 5 4.4z"/><path d="M15.5 6 Q20 10 25.5 16.5 L22 16.5 Q19 11 15.5 6z"/><path d="M26.8 12 Q50 11 70.5 29.5 L69.5 29.5 Q50 14 26.8 14.5z"/><path d="M14.5 16.5 Q10 28 11.1 41 L12 41 Q12 28 16 17z"/><path d="M24 23 L18.5 33.5 L20 33.5 L21.5 28.5 Q23 26 25 24z"/><path d="M30 22 L37 31.8 L25 49.5 L24.3 49 L34.5 31.8 L29.5 22.5z"/><circle cx="17.3" cy="51.5" r="2.2"/><path d="M14.5 55.5 Q20 57.5 25.5 53.5 L24.5 56 Q19 59 14.5 56.5z"/></g><g fill="#fff"><rect x="24.3" y="6.0" width="2.6" height="2.6" transform="rotate(45 25.6 7.3)"/><rect x="29.3" y="4.5" width="3.0" height="3.0" transform="rotate(45 30.8 6)"/><rect x="35.199999999999996" y="4.3" width="3.4" height="3.4" transform="rotate(45 36.9 6)"/><rect x="42.5" y="4.2" width="4.0" height="4.0" transform="rotate(45 44.5 6.2)"/><rect x="48.8" y="5.9" width="4.2" height="4.2" transform="rotate(45 50.9 8)"/><rect x="56.1" y="9.200000000000001" width="4.2" height="4.2" transform="rotate(45 58.2 11.3)"/><rect x="62.599999999999994" y="13.7" width="4.0" height="4.0" transform="rotate(45 64.6 15.7)"/><rect x="67.0" y="18.400000000000002" width="3.8" height="3.8" transform="rotate(45 68.9 20.3)"/><rect x="72.10000000000001" y="22.8" width="3.6" height="3.6" transform="rotate(45 73.9 24.6)"/><rect x="77.39999999999999" y="27.3" width="3.4" height="3.4" transform="rotate(45 79.1 29)"/><rect x="81.60000000000001" y="31.4" width="3.2" height="3.2" transform="rotate(45 83.2 33)"/><rect x="85.7" y="35.1" width="3.0" height="3.0" transform="rotate(45 87.2 36.6)"/></g></svg>
<div class="t" style="left:107px;top:281px;font-size:33px;line-height:33px;font-family:'Liberation Serif',serif;color:#fff;">Inch’s Saddlery</div>
<div class="t" style="left:332px;top:299px;font-size:11px;line-height:11px;font-family:'Liberation Sans',sans-serif;color:#fff;">Your online equestrian shopping store</div>
<div class="t" style="left:836px;top:280px;font-size:11px;line-height:11px;font-family:'Liberation Sans',sans-serif;color:#fff;transform:scaleX(0.984);">Quick Search</div>
<div class="a" style="left:836px;top:295px;width:107px;height:19px;background:#fff;border-radius:10px 0 0 10px"></div>
<div class="a" style="left:533px;top:340px;width:410px;height:20px;background:linear-gradient(#cdbb98,#b39f78);border-radius:0 0 0 18px"></div>
<div class="t" style="left:665px;top:345px;font-size:11px;line-height:11px;font-family:'Liberation Sans',sans-serif;color:#7a2a1a;transform:scaleX(0.937);">Store Home</div>
<div class="t" style="left:748px;top:345px;font-size:11px;line-height:11px;font-family:'Liberation Sans',sans-serif;color:#7a2a1a;transform:scaleX(0.944);">Site Map</div>
<div class="t" style="left:816px;top:345px;font-size:11px;line-height:11px;font-family:'Liberation Sans',sans-serif;color:#7a2a1a;">Search</div>
<div class="t" style="left:878px;top:345px;font-size:11px;line-height:11px;font-family:'Liberation Sans',sans-serif;color:#7a2a1a;transform:scaleX(0.968);">Checkout</div>
<div class="a" style="left:47px;top:378px;width:170px;height:282px;background:linear-gradient(#c9b994,#b8a47e);border-radius:9px 9px 0 0"></div>
<div class="a" style="left:47px;top:412px;width:170px;height:1px;background:#ddd0b4"></div>
<div class="a" style="left:47px;top:437px;width:170px;height:1px;background:#ddd0b4"></div>
<div class="a" style="left:47px;top:462px;width:170px;height:1px;background:#ddd0b4"></div>
<div class="a" style="left:47px;top:487px;width:170px;height:1px;background:#ddd0b4"></div>
<div class="a" style="left:47px;top:526px;width:170px;height:1px;background:#ddd0b4"></div>
<div class="a" style="left:47px;top:551px;width:170px;height:1px;background:#ddd0b4"></div>
<div class="a" style="left:47px;top:576px;width:170px;height:1px;background:#ddd0b4"></div>
<div class="a" style="left:47px;top:601px;width:170px;height:1px;background:#ddd0b4"></div>
<div class="a" style="left:47px;top:626px;width:170px;height:1px;background:#ddd0b4"></div>
<div class="a" style="left:47px;top:651px;width:170px;height:1px;background:#ddd0b4"></div>
<div class="t" style="left:62px;top:395px;font-size:11px;line-height:11px;font-family:'Liberation Sans',sans-serif;color:#7a2a1a;transform:scaleX(1.031);">Ladieswear</div>
<div class="t" style="left:62px;top:420px;font-size:11px;line-height:11px;font-family:'Liberation Sans',sans-serif;color:#7a2a1a;transform:scaleX(1.025);">Menswear</div>
<div class="t" style="left:62px;top:445px;font-size:11px;line-height:11px;font-family:'Liberation Sans',sans-serif;color:#7a2a1a;transform:scaleX(0.956);">Competition Wear</div>
<div class="t" style="left:62px;top:470px;font-size:11px;line-height:11px;font-family:'Liberation Sans',sans-serif;color:#7a2a1a;transform:scaleX(0.928);">Children</div>
<div class="t" style="left:62px;top:495px;font-size:11px;line-height:11px;font-family:'Liberation Sans',sans-serif;color:#7a2a1a;transform:scaleX(0.992);">Bridles, Browbands,Reins,</div>
<div class="t" style="left:62px;top:509px;font-size:11px;line-height:11px;font-family:'Liberation Sans',sans-serif;color:#7a2a1a;transform:scaleX(0.959);">Girths &amp; Head Collars</div>
<div class="t" style="left:62px;top:534px;font-size:11px;line-height:11px;font-family:'Liberation Sans',sans-serif;color:#7a2a1a;transform:scaleX(0.976);">Bits - Neue Schule</div>
<div class="t" style="left:62px;top:559px;font-size:11px;line-height:11px;font-family:'Liberation Sans',sans-serif;color:#7a2a1a;">Spurs and Straps</div>
<div class="t" style="left:62px;top:584px;font-size:11px;line-height:11px;font-family:'Liberation Sans',sans-serif;color:#7a2a1a;transform:scaleX(0.984);">Squares Pads and Bandages</div>
<div class="t" style="left:62px;top:609px;font-size:11px;line-height:11px;font-family:'Liberation Sans',sans-serif;color:#7a2a1a;transform:scaleX(0.991);">Horse Boots</div>
<div class="t" style="left:62px;top:634px;font-size:11px;line-height:11px;font-family:'Liberation Sans',sans-serif;color:#7a2a1a;transform:scaleX(1.017);">Ariat</div>
<div class="a" style="left:235px;top:402px;width:186px;height:41px;background:#955243;border-radius:11px;box-shadow:0 1px 0 #e8d8c8"></div>
<div class="t" style="left:295.734375px;top:416px;font-size:14px;line-height:14px;font-family:'Liberation Serif',serif;color:#fbf0e8;">Ladieswear</div>
<div class="a" style="left:436px;top:402px;width:186px;height:41px;background:#955243;border-radius:11px;box-shadow:0 1px 0 #e8d8c8"></div>
<div class="t" style="left:499.8359375px;top:416px;font-size:14px;line-height:14px;font-family:'Liberation Serif',serif;color:#fbf0e8;">Menswear</div>
<div class="a" style="left:634px;top:402px;width:186px;height:41px;background:#955243;border-radius:11px;box-shadow:0 1px 0 #e8d8c8"></div>
<div class="t" style="left:675.7734375px;top:416px;font-size:14px;line-height:14px;font-family:'Liberation Serif',serif;color:#fbf0e8;">Competition Wear</div>
<div class="a" style="left:235px;top:488px;width:186px;height:41px;background:#955243;border-radius:11px;box-shadow:0 1px 0 #e8d8c8"></div>
<div class="t" style="left:303.5px;top:502px;font-size:14px;line-height:14px;font-family:'Liberation Serif',serif;color:#fbf0e8;">Children</div>
<div class="a" style="left:436px;top:488px;width:186px;height:56px;background:#955243;border-radius:11px;box-shadow:0 1px 0 #e8d8c8"></div>
<div class="t" style="left:453.9296875px;top:501px;font-size:14px;line-height:14px;font-family:'Liberation Serif',serif;color:#fbf0e8;">Bridles, Browbands,Reins,</div>
<div class="t" style="left:465.8046875px;top:516px;font-size:14px;line-height:14px;font-family:'Liberation Serif',serif;color:#fbf0e8;">Girths &amp; Head Collars</div>
<div class="a" style="left:634px;top:488px;width:186px;height:41px;background:#955243;border-radius:11px;box-shadow:0 1px 0 #e8d8c8"></div>
<div class="t" style="left:674.3046875px;top:502px;font-size:14px;line-height:14px;font-family:'Liberation Serif',serif;color:#fbf0e8;">Bits - Neue Schule</div>
<div class="a" style="left:235px;top:588px;width:186px;height:41px;background:#955243;border-radius:11px;box-shadow:0 1px 0 #e8d8c8"></div>
<div class="t" style="left:280.9453125px;top:602px;font-size:14px;line-height:14px;font-family:'Liberation Serif',serif;color:#fbf0e8;">Spurs and Straps</div>
<div class="a" style="left:436px;top:588px;width:186px;height:41px;background:#955243;border-radius:11px;box-shadow:0 1px 0 #e8d8c8"></div>
<div class="t" style="left:451.0234375px;top:602px;font-size:14px;line-height:14px;font-family:'Liberation Serif',serif;color:#fbf0e8;">Squares Pads and Bandages</div>
<div class="a" style="left:634px;top:588px;width:186px;height:41px;background:#955243;border-radius:11px;box-shadow:0 1px 0 #e8d8c8"></div>
<div class="t" style="left:692.1875px;top:602px;font-size:14px;line-height:14px;font-family:'Liberation Serif',serif;color:#fbf0e8;">Horse Boots</div>
<div class="a" style="left:235px;top:381px;width:188px;height:83px;border:1px dashed #000"></div>
<div class="a" style="left:235px;top:369px;width:12px;height:12px;background:#cfc6c2;border:1px solid #7a0a05"></div>
<svg class="a" style="left:236px;top:370px;" width="10" height="10" viewBox="0 0 10 10"><path d="M5 1 L9 5 H6 V9 H4 V5 H1z" fill="#7a0a05"/></svg>
<div class="a" style="left:247px;top:369px;width:12px;height:12px;background:#cfc6c2;border:1px solid #7a0a05"></div>
<svg class="a" style="left:248px;top:370px;" width="10" height="10" viewBox="0 0 10 10"><path d="M5 9 L9 5 H6 V1 H4 V5 H1z" fill="#7a0a05"/></svg>
<div class="a" style="left:259px;top:369px;width:12px;height:12px;background:#cfc6c2;border:1px solid #7a0a05"></div>
<svg class="a" style="left:260px;top:370px;" width="10" height="10" viewBox="0 0 10 10"><path d="M1 5 L5 1 V4 H9 V6 H5 V9z" fill="#7a0a05"/></svg>
<div class="a" style="left:271px;top:369px;width:12px;height:12px;background:#cfc6c2;border:1px solid #7a0a05"></div>
<svg class="a" style="left:272px;top:370px;" width="10" height="10" viewBox="0 0 10 10"><path d="M9 5 L5 1 V4 H1 V6 H5 V9z" fill="#7a0a05"/></svg>
<div class="a" style="left:845px;top:378px;width:98px;height:140px;background:#d3a00a;border-radius:10px 0 0 10px"></div>
<div class="t" style="left:860px;top:391px;font-size:19px;line-height:19px;font-family:'Liberation Serif',serif;color:#fff;transform:scaleX(0.964);">Shopping b</div>
<svg class="a" style="left:876px;top:419px;" width="38" height="46" viewBox="0 0 38 46"><defs><linearGradient id="bg1" x1="0" y1="0" x2="1" y2="1"><stop offset="0" stop-color="#f0a060"/><stop offset="1" stop-color="#a85a20"/></linearGradient></defs><path d="M10 14 Q10 1 19 1 Q28 1 28 14" stroke="#9a9070" stroke-width="1" fill="none"/><path d="M13 14 Q13 4 20 4 Q27 4 26 14" stroke="#7a7060" stroke-width=".8" fill="none"/><path d="M7 13 H31 L34 40 L8 44 L3 42z" fill="url(#bg1)"/><path d="M31 13 L34 40 L29 42 L28 15z" fill="#8a4a18" opacity=".5"/><path d="M7 13 H31 L30 15 H8z" fill="#6a3a10"/><circle cx="13" cy="18" r="1.4" fill="#2a3040"/><circle cx="25" cy="18" r="1.4" fill="#2a3040"/></svg>
<div class="t" style="left:934px;top:432px;font-size:10px;line-height:10px;font-family:'Liberation Sans',sans-serif;color:#fff;">Ite</div>
<div class="t" style="left:934px;top:445px;font-size:13px;line-height:13px;font-family:'Liberation Sans',sans-serif;color:#fff;">V</div>
<div class="a" style="left:862px;top:473px;width:67px;height:25px;background:#57501f;border:2px solid #f4ecd0;border-radius:12px"></div>
<div class="t" style="left:870px;top:478px;font-size:13px;line-height:13px;font-family:'Liberation Serif',serif;color:#f4f0e0;transform:scaleX(0.964);">Checkout</div>
<div class="a" style="left:934px;top:473px;width:12px;height:25px;background:#57501f;border:2px solid #f4ecd0;border-radius:12px 0 0 12px"></div>
<div class="t" style="left:845px;top:530px;font-size:21px;line-height:21px;font-family:'Liberation Serif',serif;color:#6e2418;transform:scaleX(1.043);">New produ</div>
<div class="t" style="left:863px;top:576px;font-size:11px;line-height:11px;font-family:'Liberation Sans',sans-serif;color:#222;">1.</div>
<div class="t" style="left:885px;top:576px;font-size:11px;line-height:11px;font-family:'Liberation Sans',sans-serif;color:#7a2a1a;">The Team-U</div>
<div class="t" style="left:863px;top:590px;font-size:11px;line-height:11px;font-family:'Liberation Sans',sans-serif;color:#222;">2.</div>
<div class="t" style="left:885px;top:590px;font-size:11px;line-height:11px;font-family:'Liberation Sans',sans-serif;color:#7a2a1a;">The Verbind</div>
<div class="t" style="left:885px;top:604px;font-size:11px;line-height:11px;font-family:'Liberation Sans',sans-serif;color:#7a2a1a;">(12mm)</div>
<div class="t" style="left:863px;top:618px;font-size:11px;line-height:11px;font-family:'Liberation Sans',sans-serif;color:#222;">3.</div>
<div class="t" style="left:885px;top:618px;font-size:11px;line-height:11px;font-family:'Liberation Sans',sans-serif;color:#7a2a1a;">Ariat Tek Gr</div>
<div class="t" style="left:863px;top:632px;font-size:11px;line-height:11px;font-family:'Liberation Sans',sans-serif;color:#222;">4.</div>
<div class="t" style="left:885px;top:632px;font-size:11px;line-height:11px;font-family:'Liberation Sans',sans-serif;color:#7a2a1a;">HKM Lambs</div>
<div class="t" style="left:885px;top:646px;font-size:11px;line-height:11px;font-family:'Liberation Sans',sans-serif;color:#7a2a1a;">Saddle Pad</div>
<div class="a" style="left:943px;top:222px;width:18px;height:438px;background:linear-gradient(90deg,#e6e6e6,#f2f2f2)"></div>
<svg class="a" style="left:947px;top:230px;" width="9" height="5" viewBox="0 0 9 5"><path d="M0 5 L4.5 0 L9 5z" fill="#333"/></svg>
<div class="a" style="left:944px;top:241px;width:16px;height:258px;background:linear-gradient(90deg,#f4f4f4,#e6e6e6 50%,#d8d8d8);border:1px solid #9a9a9a;border-radius:2px"></div>
<div class="a" style="left:949px;top:366px;width:7px;height:1px;background:#5a5a5a"></div>
<div class="a" style="left:949px;top:368px;width:7px;height:1px;background:#5a5a5a"></div>
<div class="a" style="left:949px;top:370px;width:7px;height:1px;background:#5a5a5a"></div>
<svg class="a" style="left:947px;top:649px;" width="9" height="5" viewBox="0 0 9 5"><path d="M0 0 L4.5 5 L9 0z" fill="#333"/></svg>
<div class="a" style="left:25px;top:660px;width:937px;height:17px;background:linear-gradient(#e6e6e6,#f2f2f2)"></div>
<svg class="a" style="left:32px;top:665px;" width="5" height="8" viewBox="0 0 5 8"><path d="M5 0 L0 4 L5 8z" fill="#333"/></svg>
<div class="a" style="left:44px;top:661px;width:793px;height:15px;background:linear-gradient(#f4f4f4,#e6e6e6 50%,#d6d6d6);border:1px solid #9a9a9a;border-radius:2px"></div>
<div class="a" style="left:464px;top:665px;width:1px;height:7px;background:#5a5a5a"></div>
<div class="a" style="left:466px;top:665px;width:1px;height:7px;background:#5a5a5a"></div>
<div class="a" style="left:468px;top:665px;width:1px;height:7px;background:#5a5a5a"></div>
<svg class="a" style="left:933px;top:665px;" width="5" height="8" viewBox="0 0 5 8"><path d="M0 0 L5 4 L0 8z" fill="#333"/></svg>
<div class="a" style="left:24px;top:683px;width:938px;height:21px;background:linear-gradient(90deg,#b9cce2,#cddbec 60%,#d7e3f0);border:1px solid #3a3a3a;border-bottom:none;box-shadow:inset 1px 1px #fff"></div>
<div class="t" style="left:28px;top:688px;font-size:12px;line-height:12px;font-family:'Liberation Sans',sans-serif;color:#3a4350;transform:scaleX(0.984);">Catalog Details - Online Catalogue -</div>
<svg class="a" style="left:918px;top:688px;" width="13" height="13" viewBox="0 0 13 13"><circle cx="6.5" cy="6.5" r="6" fill="#0010e0" stroke="#fff" stroke-width=".6"/><text x="3" y="11" font-size="11" font-weight="bold" fill="#fff" font-family="Liberation Sans">?</text></svg>
<svg class="a" style="left:935px;top:688px;" width="9" height="11" viewBox="0 0 9 11"><path d="M2 0h5v6h2v1H5v4H4V7H0V6h2z" fill="#333"/><rect x="3" y="1" width="2" height="5" fill="#d0dcea"/></svg>
<div class="a" style="left:947px;top:688px;width:13px;height:12px;border:1px solid #8a96a8;background:#dde6f0;border-radius:1px"></div>
<svg class="a" style="left:949px;top:690px;" width="9" height="8" viewBox="0 0 9 8"><path d="M1.5 1l6 6M7.5 1l-6 6" stroke="#333" stroke-width="1.6"/></svg>
<div class="a" style="left:24px;top:704px;width:938px;height:364px;background:#f0f0f0;border-right:1px solid #909090;border-bottom:1px solid #808080"></div>
<div class="a" style="left:24px;top:704px;width:937px;height:2px;background:#fff"></div>
<div class="a" style="left:26px;top:706px;width:933px;height:1px;background:#5a5a5a"></div>
<div class="a" style="left:28px;top:707px;width:928px;height:30px;background:linear-gradient(#fdfdfe 0,#f0f2f8 25%,#d8ddec 45%,#d3d9ea 100%)"></div>
<div class="a" style="left:30px;top:711px;width:2px;height:2px;background:#a3acc0"></div>
<div class="a" style="left:30px;top:715px;width:2px;height:2px;background:#a3acc0"></div>
<div class="a" style="left:30px;top:719px;width:2px;height:2px;background:#a3acc0"></div>
<div class="a" style="left:30px;top:723px;width:2px;height:2px;background:#a3acc0"></div>
<div class="a" style="left:30px;top:727px;width:2px;height:2px;background:#a3acc0"></div>
<div class="a" style="left:30px;top:731px;width:2px;height:2px;background:#a3acc0"></div>
<div class="a" style="left:38px;top:712px;width:98px;height:22px;background:linear-gradient(#f6f7fb 0,#eef0f7 38%,#dadfed 42%,#d6dbea 100%);border:1px solid #a8a8a8"></div>
<div class="a" style="left:118px;top:713px;width:17px;height:20px;background:#f4f4f4;border-left:2px solid #b0b0b0;border-right:1px solid #c8c8c8"></div>
<svg class="a" style="left:123px;top:721px;" width="8" height="5" viewBox="0 0 8 5"><path d="M0 0h8l-4 5z" fill="#a0a0a0"/></svg>
<div class="a" style="left:141px;top:713px;width:1px;height:20px;background:#a8b0c2;box-shadow:1px 0 #fff"></div>
<div class="a" style="left:146px;top:712px;width:147px;height:22px;background:#efeff1;border:1px solid #a8a8a8"></div>
<div class="a" style="left:275px;top:713px;width:17px;height:20px;background:#f4f4f4;border-left:2px solid #b0b0b0;border-right:1px solid #c8c8c8"></div>
<svg class="a" style="left:280px;top:721px;" width="8" height="5" viewBox="0 0 8 5"><path d="M0 0h8l-4 5z" fill="#a0a0a0"/></svg>
<div class="a" style="left:297px;top:713px;width:1px;height:20px;background:#a8b0c2;box-shadow:1px 0 #fff"></div>
<div class="a" style="left:301px;top:712px;width:49px;height:22px;background:linear-gradient(#f6f7fb 0,#eef0f7 38%,#dadfed 42%,#d6dbea 100%);border:1px solid #a8a8a8"></div>
<div class="a" style="left:332px;top:713px;width:17px;height:20px;background:#f4f4f4;border-left:2px solid #b0b0b0;border-right:1px solid #c8c8c8"></div>
<svg class="a" style="left:337px;top:721px;" width="8" height="5" viewBox="0 0 8 5"><path d="M0 0h8l-4 5z" fill="#a0a0a0"/></svg>
<div class="a" style="left:353px;top:713px;width:1px;height:20px;background:#a8b0c2;box-shadow:1px 0 #fff"></div>
<div class="a" style="left:357px;top:712px;width:98px;height:22px;background:linear-gradient(#f6f7fb 0,#eef0f7 38%,#dadfed 42%,#d6dbea 100%);border:1px solid #a8a8a8"></div>
<div class="a" style="left:437px;top:713px;width:17px;height:20px;background:#f4f4f4;border-left:2px solid #b0b0b0;border-right:1px solid #c8c8c8"></div>
<svg class="a" style="left:442px;top:721px;" width="8" height="5" viewBox="0 0 8 5"><path d="M0 0h8l-4 5z" fill="#a0a0a0"/></svg>
<div class="a" style="left:459px;top:713px;width:1px;height:20px;background:#a8b0c2;box-shadow:1px 0 #fff"></div>
<div class="t" style="left:465px;top:712px;font-size:18px;line-height:18px;font-family:'Liberation Serif',serif;color:#9c9c9c;font-weight:bold;transform:scaleX(1.154);">A</div>
<div class="a" style="left:464px;top:726px;width:17px;height:3px;background:linear-gradient(90deg,#a8a8a8,#d8d8d8)"></div>
<svg class="a" style="left:486px;top:721px;" width="7" height="4" viewBox="0 0 7 4"><path d="M0 0h7l-3.5 4z" fill="#555"/></svg>
<div class="a" style="left:498px;top:711px;width:1px;height:23px;background:#9aa2b4;box-shadow:1px 0 #fff"></div>
<div class="t" style="left:505px;top:712px;font-size:20px;line-height:20px;font-family:'Liberation Serif',serif;color:#a0a0a0;font-weight:bold;transform:scaleX(1.087);">B</div>
<div class="t" style="left:530px;top:712px;font-size:20px;line-height:20px;font-family:'Liberation Serif',serif;color:#a0a0a0;transform:scaleX(1.100);font-style:italic">I</div>
<div class="t" style="left:552px;top:712px;font-size:18px;line-height:18px;font-family:'Liberation Serif',serif;color:#a0a0a0;transform:scaleX(1.077);">U</div>
<div class="a" style="left:552px;top:728px;width:14px;height:2px;background:#a0a0a0"></div>
<div class="a" style="left:36px;top:745px;width:100px;height:271px;background:#fff;border:1px solid #828790"></div>
<div class="t" style="left:39px;top:749px;font-size:12px;line-height:12px;font-family:'Liberation Sans',sans-serif;color:#000;transform:scaleX(0.853);">General</div>
<div class="t" style="left:39px;top:766px;font-size:12px;line-height:12px;font-family:'Liberation Sans',sans-serif;color:#000;transform:scaleX(0.884);">Page Settings</div>
<div class="a" style="left:37px;top:780px;width:98px;height:17px;background:#3399ff"></div>
<div class="t" style="left:39px;top:783px;font-size:12px;line-height:12px;font-family:'Liberation Sans',sans-serif;color:#fff;transform:scaleX(0.889);">Layout</div>
<div class="a" style="left:37px;top:798px;width:98px;height:16px;overflow:hidden">
<div class="t" style="left:2px;top:2px;font-size:12px;line-height:12px;font-family:'Liberation Sans',sans-serif;color:#000;transform:scaleX(0.910);">Extended Infomation</div>
</div>
<div class="a" style="left:152px;top:761px;width:547px;height:253px;background:#f0f0f0;border:1px solid #a0a0a0"></div>
<div class="a" style="left:153px;top:762px;width:530px;height:251px;overflow:hidden">
<div class="a" style="left:2px;top:6px;width:9px;height:9px;border:1px solid #8a8a8a;background:linear-gradient(#fff,#e4e4e4)"></div>
<div class="a" style="left:4px;top:10px;width:5px;height:1px;background:#333"></div>
<div class="t" style="left:17px;top:3px;font-size:12px;line-height:12px;font-family:'Liberation Sans',sans-serif;color:#000;font-weight:bold;transform:scaleX(0.960);">Site</div>
<div class="t" style="left:17px;top:21px;font-size:12px;line-height:12px;font-family:'Liberation Sans',sans-serif;color:#000;transform:scaleX(0.970);">Overall Page Layout</div>
<div class="a" style="left:275px;top:19px;width:255px;height:17px;background:#fff"></div>
<div class="t" style="left:278px;top:21px;font-size:12px;line-height:12px;font-family:'Liberation Sans',sans-serif;color:#000;transform:scaleX(0.970);">Use Parent (=Works Best with Hotshot)</div>
<div class="a" style="left:2px;top:42px;width:9px;height:9px;border:1px solid #8a8a8a;background:linear-gradient(#fff,#e4e4e4)"></div>
<div class="a" style="left:4px;top:46px;width:5px;height:1px;background:#333"></div>
<div class="t" style="left:17px;top:39px;font-size:12px;line-height:12px;font-family:'Liberation Sans',sans-serif;color:#000;font-weight:bold;transform:scaleX(0.960);">Section</div>
<div class="t" style="left:17px;top:57px;font-size:12px;line-height:12px;font-family:'Liberation Sans',sans-serif;color:#000;transform:scaleX(0.970);">Bottom Sub Section List Layout</div>
<div class="a" style="left:275px;top:55px;width:255px;height:17px;background:#fff"></div>
<div class="t" style="left:278px;top:57px;font-size:12px;line-height:12px;font-family:'Liberation Sans',sans-serif;color:#000;transform:scaleX(0.970);">Use Parent (=No Layout)</div>
<div class="t" style="left:17px;top:75px;font-size:12px;line-height:12px;font-family:'Liberation Sans',sans-serif;color:#000;transform:scaleX(0.970);">Column Count For First Row Of Section Lists</div>
<div class="a" style="left:275px;top:73px;width:255px;height:17px;background:#fff"></div>
<div class="t" style="left:278px;top:75px;font-size:12px;line-height:12px;font-family:'Liberation Sans',sans-serif;color:#000;transform:scaleX(0.970);">Use Parent (=3)</div>
<div class="t" style="left:17px;top:93px;font-size:12px;line-height:12px;font-family:'Liberation Sans',sans-serif;color:#000;transform:scaleX(0.970);">Column Count For Section Lists</div>
<div class="a" style="left:275px;top:91px;width:255px;height:17px;background:#fff"></div>
<div class="t" style="left:278px;top:93px;font-size:12px;line-height:12px;font-family:'Liberation Sans',sans-serif;color:#000;transform:scaleX(0.970);">Use Parent (=3)</div>
<div class="t" style="left:17px;top:111px;font-size:12px;line-height:12px;font-family:'Liberation Sans',sans-serif;color:#000;transform:scaleX(0.970);">Main Product Area Layout</div>
<div class="a" style="left:275px;top:109px;width:255px;height:17px;background:#fff"></div>
<div class="t" style="left:278px;top:111px;font-size:12px;line-height:12px;font-family:'Liberation Sans',sans-serif;color:#000;transform:scaleX(0.970);">Use Parent (=Section Page With Section Name At The Top)</div>
<div class="t" style="left:17px;top:129px;font-size:12px;line-height:12px;font-family:'Liberation Sans',sans-serif;color:#000;transform:scaleX(0.970);">Section Link Layout</div>
<div class="a" style="left:275px;top:127px;width:255px;height:17px;background:#fff"></div>
<div class="t" style="left:278px;top:129px;font-size:12px;line-height:12px;font-family:'Liberation Sans',sans-serif;color:#000;transform:scaleX(0.970);">Homepage list</div>
<div class="t" style="left:17px;top:147px;font-size:12px;line-height:12px;font-family:'Liberation Sans',sans-serif;color:#000;transform:scaleX(0.970);">Top Sub Section List Layout</div>
<div class="a" style="left:275px;top:145px;width:255px;height:17px;background:#fff"></div>
<div class="t" style="left:278px;top:147px;font-size:12px;line-height:12px;font-family:'Liberation Sans',sans-serif;color:#000;transform:scaleX(0.970);">Standard Sub Section List</div>
<div class="a" style="left:2px;top:168px;width:9px;height:9px;border:1px solid #8a8a8a;background:linear-gradient(#fff,#e4e4e4)"></div>
<div class="a" style="left:4px;top:172px;width:5px;height:1px;background:#333"></div>
<div class="t" style="left:17px;top:165px;font-size:12px;line-height:12px;font-family:'Liberation Sans',sans-serif;color:#000;font-weight:bold;transform:scaleX(0.960);">Product</div>
<div class="t" style="left:17px;top:183px;font-size:12px;line-height:12px;font-family:'Liberation Sans',sans-serif;color:#000;transform:scaleX(0.970);">Column Count For Products</div>
<div class="a" style="left:275px;top:181px;width:255px;height:17px;background:#fff"></div>
<div class="t" style="left:278px;top:183px;font-size:12px;line-height:12px;font-family:'Liberation Sans',sans-serif;color:#000;transform:scaleX(0.970);">Use Parent (=1)</div>
<div class="t" style="left:17px;top:201px;font-size:12px;line-height:12px;font-family:'Liberation Sans',sans-serif;color:#000;transform:scaleX(0.970);">Price Layout</div>
<div class="a" style="left:275px;top:199px;width:255px;height:17px;background:#fff"></div>
<div class="t" style="left:278px;top:201px;font-size:12px;line-height:12px;font-family:'Liberation Sans',sans-serif;color:#000;transform:scaleX(0.970);">Use Parent (=Standard Tax Inclusive Price)</div>
<div class="t" style="left:17px;top:219px;font-size:12px;line-height:12px;font-family:'Liberation Sans',sans-serif;color:#000;transform:scaleX(0.970);">Product Layout</div>
<div class="a" style="left:275px;top:217px;width:255px;height:17px;background:#fff"></div>
<div class="t" style="left:278px;top:219px;font-size:12px;line-height:12px;font-family:'Liberation Sans',sans-serif;color:#000;transform:scaleX(0.970);">Use Parent (=Standard Layout Using CSS)</div>
<div class="t" style="left:17px;top:237px;font-size:12px;line-height:12px;font-family:'Liberation Sans',sans-serif;color:#000;transform:scaleX(0.970);">Product List Layout</div>
<div class="a" style="left:275px;top:235px;width:255px;height:17px;background:#fff"></div>
<div class="t" style="left:278px;top:237px;font-size:12px;line-height:12px;font-family:'Liberation Sans',sans-serif;color:#000;transform:scaleX(0.970);">Use Parent (=Product List With Horizontal Dividers)</div>
</div>
<div class="a" style="left:683px;top:762px;width:15px;height:251px;background:#ececec;border-left:1px solid #e0e0e0"></div>
<svg class="a" style="left:687px;top:768px;" width="7" height="4" viewBox="0 0 7 4"><path d="M0 4 L3.5 0 L7 4z" fill="#333"/></svg>
<div class="a" style="left:683px;top:777px;width:15px;height:234px;background:linear-gradient(90deg,#f4f4f4,#e2e2e2 50%,#d0d0d0);border:1px solid #9a9a9a;border-radius:2px"></div>
<div class="a" style="left:687px;top:894px;width:7px;height:1px;background:#555"></div>
<div class="a" style="left:687px;top:896px;width:7px;height:1px;background:#555"></div>
<div class="a" style="left:687px;top:898px;width:7px;height:1px;background:#555"></div>
<div class="a" style="left:940px;top:737px;width:15px;height:278px;background:#ececec"></div>
<svg class="a" style="left:944px;top:744px;" width="7" height="4" viewBox="0 0 7 4"><path d="M0 4 L3.5 0 L7 4z" fill="#333"/></svg>
<div class="a" style="left:940px;top:755px;width:15px;height:155px;background:linear-gradient(90deg,#f4f4f4,#e2e2e2 50%,#d0d0d0);border:1px solid #9a9a9a;border-radius:2px"></div>
<div class="a" style="left:944px;top:830px;width:7px;height:1px;background:#555"></div>
<div class="a" style="left:944px;top:832px;width:7px;height:1px;background:#555"></div>
<div class="a" style="left:944px;top:834px;width:7px;height:1px;background:#555"></div>
<svg class="a" style="left:944px;top:1004px;" width="7" height="4" viewBox="0 0 7 4"><path d="M0 0 L3.5 4 L7 0z" fill="#333"/></svg>
<svg class="a" style="left:396px;top:879px;" width="146" height="36" viewBox="0 0 146 36"><ellipse cx="72.5" cy="18" rx="70" ry="15.5" fill="none" stroke="#e8101c" stroke-width="2" transform="rotate(-2 72.5 18)"/></svg>
<div class="a" style="left:26px;top:1015px;width:930px;height:26px;background:linear-gradient(#fdfdfe 0,#f2f4f9 25%,#dadfed 50%,#d6dbea 100%)"></div>
<div class="a" style="left:26px;top:1015px;width:619px;height:26px;background:linear-gradient(#fcfcfe 0,#eef1f8 25%,#d8ddec 50%,#d4d9ea 100%)"></div>
<div class="a" style="left:28px;top:1019px;width:2px;height:2px;background:#a3acc0"></div>
<div class="a" style="left:28px;top:1023px;width:2px;height:2px;background:#a3acc0"></div>
<div class="a" style="left:28px;top:1027px;width:2px;height:2px;background:#a3acc0"></div>
<div class="a" style="left:28px;top:1031px;width:2px;height:2px;background:#a3acc0"></div>
<div class="a" style="left:28px;top:1035px;width:2px;height:2px;background:#a3acc0"></div>
<svg class="a" style="left:45px;top:1023px;" width="7" height="12" viewBox="0 0 7 12"><path d="M7 0 V12 L0 6z" fill="#4444b8"/></svg>
<svg class="a" style="left:68px;top:1023px;" width="7" height="12" viewBox="0 0 7 12"><path d="M0 0 V12 L7 6z" fill="#4444b8"/></svg>
<div class="t" style="left:106px;top:1022px;font-size:12px;line-height:12px;font-family:'Liberation Sans',sans-serif;color:#9b9b9b;transform:scaleX(0.978);">Apply changes</div>
<div class="t" style="left:210px;top:1022px;font-size:12px;line-height:12px;font-family:'Liberation Sans',sans-serif;color:#9b9b9b;transform:scaleX(0.965);">Cancel changes</div>
<div class="t" style="left:319px;top:1022px;font-size:12px;line-height:12px;font-family:'Liberation Sans',sans-serif;color:#9b9b9b;transform:scaleX(1.009);">GoTo Original</div>
<div class="t" style="left:419px;top:1022px;font-size:12px;line-height:12px;font-family:'Liberation Sans',sans-serif;color:#9b9b9b;transform:scaleX(0.893);">Reset</div>
<div class="t" style="left:473px;top:1022px;font-size:12px;line-height:12px;font-family:'Liberation Sans',sans-serif;color:#9b9b9b;transform:scaleX(0.948);">Reset Duplicates</div>
<svg class="a" style="left:566px;top:1020px;" width="16" height="16" viewBox="0 0 16 16"><circle cx="8" cy="8" r="7.5" fill="#3f6fc4"/><circle cx="8" cy="6" r="5.5" fill="#7aa2e4" opacity=".6"/><text x="4.3" y="12.5" font-size="12" font-weight="bold" fill="#fff" font-family="Liberation Sans">?</text></svg>
<div class="t" style="left:585px;top:1022px;font-size:12px;line-height:12px;font-family:'Liberation Sans',sans-serif;color:#000;transform:scaleX(0.964);">How Do I?</div>
<div class="a" style="left:26px;top:1042px;width:935px;height:25px;background:#fff"></div>
<svg class="a" style="left:30px;top:1048px;" width="15" height="15" viewBox="0 0 15 15"><rect x=".5" y=".5" width="13" height="13" fill="#fff" stroke="#000"/><rect x="2" y="3" width="6" height="1" fill="#333"/><rect x="2" y="5" width="6" height="1" fill="#333"/><rect x="2" y="8" width="10" height="1" fill="#333"/><rect x="2" y="10" width="10" height="1" fill="#333"/><rect x="9" y="2" width="3" height="4" fill="#a0d010"/></svg>
<div class="t" style="left:49px;top:1050px;font-size:12px;line-height:12px;font-family:'Liberation Sans',sans-serif;color:#000;transform:scaleX(0.979);">Catalog Details - Online Catalogue -</div>
<div class="a" style="left:251px;top:1045px;width:172px;height:21px;background:linear-gradient(#ececec,#e2e2e2);border:1px solid #9a9a9a"></div>
<svg class="a" style="left:255px;top:1047px;" width="15" height="15" viewBox="0 0 15 15"><circle cx="7.5" cy="7.5" r="7" fill="#f4dc10" stroke="#6a5a00" stroke-width=".8"/><path d="M7.5 7.5 Q9.5 7 9 5 Q8 3 5.5 4 Q3 5.5 4 8.5 Q5.5 12 9.5 11 Q12.5 9.5 12 6" stroke="#222" stroke-width="1.4" fill="none"/></svg>
<div class="t" style="left:274px;top:1049px;font-size:12px;line-height:12px;font-family:'Liberation Sans',sans-serif;color:#000;transform:scaleX(0.979);">Layout Code  - Subpage list</div>
<div class="a" style="left:966px;top:171px;width:262px;height:21px;background:linear-gradient(#c4d4e6,#d2dfee 50%,#dfe8f3);border:1px solid #3a3a3a;border-bottom:none;box-shadow:inset 1px 1px #fff"></div>
<div class="t" style="left:970px;top:176px;font-size:12px;line-height:12px;font-family:'Liberation Sans',sans-serif;color:#5a6878;transform:scaleX(0.995);">Content Tree</div>
<svg class="a" style="left:1201px;top:177px;" width="8" height="10" viewBox="0 0 8 10"><path d="M2 0h4v6h2v1H4.5v3h-1V7H0V6h2z" fill="#2a3440"/><rect x="3" y="1" width="1.5" height="5" fill="#c8d8e8"/></svg>
<div class="a" style="left:1213px;top:175px;width:13px;height:13px;border:1px solid #98a8bc;background:#dde7f1;border-radius:2px"></div>
<svg class="a" style="left:1215px;top:177px;" width="9" height="9" viewBox="0 0 9 9"><path d="M2 2l5 5M7 2l-5 5" stroke="#2a3440" stroke-width="3"/><path d="M2 2l5 5M7 2l-5 5" stroke="#fff" stroke-width="1.4"/></svg>
<div class="a" style="left:966px;top:192px;width:262px;height:880px;background:#fff"></div>
<div class="a" style="left:966px;top:194px;width:260px;height:852px;background:#f0f0f0;border:1px solid #808080"></div>
<div class="a" style="left:967px;top:195px;width:258px;height:3px;background:#fff"></div>
<div class="a" style="left:971px;top:199px;width:250px;height:841px;background:#fff;border-top:2px solid #6a6a6a;border-left:2px solid #6a6a6a;border-right:1px solid #a0a0a0;border-bottom:1px solid #a0a0a0"></div>
<div class="a" style="left:974px;top:201px;width:246px;height:26px;background:#d9deec"></div>
<div class="a" style="left:974px;top:201px;width:157px;height:26px;background:linear-gradient(#fafbfd 0,#eceff7 25%,#d8ddec 50%,#d3d9ea 100%)"></div>
<div class="a" style="left:976px;top:204px;width:2px;height:2px;background:#a3acc0"></div>
<div class="a" style="left:976px;top:208px;width:2px;height:2px;background:#a3acc0"></div>
<div class="a" style="left:976px;top:212px;width:2px;height:2px;background:#a3acc0"></div>
<div class="a" style="left:976px;top:216px;width:2px;height:2px;background:#a3acc0"></div>
<div class="a" style="left:976px;top:220px;width:2px;height:2px;background:#a3acc0"></div>
<svg class="a" style="left:985px;top:206px;" width="14" height="13" viewBox="0 0 14 13"><rect x=".5" y=".5" width="12" height="12" fill="#fff" stroke="#222"/><path d="M3 3.5h7M3 5.5h7M3 7.5h7M3 9.5h7" stroke="#333"/></svg>
<div class="t" style="left:1004px;top:208px;font-size:12px;line-height:12px;font-family:'Liberation Sans',sans-serif;color:#000;transform:scaleX(0.987);">New Item</div>
<svg class="a" style="left:1062px;top:211px;" width="7" height="4" viewBox="0 0 7 4"><path d="M0 0h7l-3.5 4z" fill="#000"/></svg>
<div class="t" style="left:1075px;top:208px;font-size:12px;line-height:12px;font-family:'Liberation Sans',sans-serif;color:#9a9a9a;transform:scaleX(0.933);">Start Here</div>
<div class="a" style="left:974px;top:227px;width:244px;height:795px;overflow:hidden">
<div class="a" style="left:11px;top:17px;width:1px;height:140px;background:repeating-linear-gradient(#909090 0 1px,transparent 1px 2px)"></div>
<div class="a" style="left:30px;top:18px;width:1px;height:66px;background:repeating-linear-gradient(#909090 0 1px,transparent 1px 2px)"></div>
<div class="a" style="left:30px;top:108px;width:1px;height:12px;background:repeating-linear-gradient(#909090 0 1px,transparent 1px 2px)"></div>
<div class="a" style="left:30px;top:162px;width:1px;height:408px;background:repeating-linear-gradient(#909090 0 1px,transparent 1px 2px)"></div>
<div class="a" style="left:49px;top:197px;width:1px;height:49px;background:repeating-linear-gradient(#909090 0 1px,transparent 1px 2px)"></div>
<div class="a" style="left:49px;top:269px;width:1px;height:67px;background:repeating-linear-gradient(#909090 0 1px,transparent 1px 2px)"></div>
<div class="a" style="left:11px;top:12px;width:10px;height:1px;background:repeating-linear-gradient(90deg,#909090 0 1px,transparent 1px 2px)"></div>
<div class="a" style="left:7px;top:8px;width:9px;height:9px;border:1px solid #9a9a9a;background:linear-gradient(#fff,#e0e0e0)"></div>
<div class="a" style="left:9px;top:12px;width:5px;height:1px;background:#3a4aa0"></div>
<svg class="a" style="left:22px;top:3px;" width="16" height="15" viewBox="0 0 16 15"><path d="M1 7 L8 0 L15 7 V14 H1z" fill="#000"/><rect x="2" y="8" width="12" height="6" fill="#f0e020"/><rect x="4" y="9" width="3" height="2" fill="#fff"/><rect x="10" y="10" width="2" height="4" fill="#e02020"/><rect x="2" y="0" width="2" height="4" fill="#000"/></svg>
<div class="t" style="left:43px;top:5px;font-size:12px;line-height:12px;font-family:'Liberation Sans',sans-serif;color:#000;">About Inchs</div>
<div class="a" style="left:30px;top:30px;width:10px;height:1px;background:repeating-linear-gradient(90deg,#909090 0 1px,transparent 1px 2px)"></div>
<svg class="a" style="left:41px;top:23px;" width="16" height="12" viewBox="0 0 16 12"><rect x=".5" y=".5" width="14" height="10" fill="#fff" stroke="#000"/><rect x="15" y="1" width="1" height="11" fill="#444"/><rect x="1" y="11" width="15" height="1" fill="#444"/><rect x="2" y="2" width="5" height="7" fill="#000"/><rect x="3" y="3" width="3" height="5" fill="#30d8e8"/><path d="M3 3.5 L6 7.5" stroke="#e02020" stroke-width="1.2"/><rect x="3" y="6" width="2" height="2" fill="#f0e020"/><rect x="8" y="2" width="5" height="1" fill="#000"/><rect x="8" y="4" width="5" height="1" fill="#000"/><rect x="8" y="6" width="5" height="1" fill="#000"/><rect x="8" y="8" width="5" height="1" fill="#000"/></svg>
<div class="t" style="left:62px;top:23px;font-size:12px;line-height:12px;font-family:'Liberation Sans',sans-serif;color:#000;transform:scaleX(0.860);">SPECIAL OFFERS on DRESSAGE BOOTS</div>
<div class="a" style="left:30px;top:48px;width:10px;height:1px;background:repeating-linear-gradient(90deg,#909090 0 1px,transparent 1px 2px)"></div>
<svg class="a" style="left:41px;top:41px;" width="16" height="12" viewBox="0 0 16 12"><rect x=".5" y=".5" width="14" height="10" fill="#fff" stroke="#000"/><rect x="15" y="1" width="1" height="11" fill="#444"/><rect x="1" y="11" width="15" height="1" fill="#444"/><rect x="2" y="2" width="5" height="7" fill="#000"/><rect x="3" y="3" width="3" height="5" fill="#30d8e8"/><path d="M3 3.5 L6 7.5" stroke="#e02020" stroke-width="1.2"/><rect x="3" y="6" width="2" height="2" fill="#f0e020"/><rect x="8" y="2" width="5" height="1" fill="#000"/><rect x="8" y="4" width="5" height="1" fill="#000"/><rect x="8" y="6" width="5" height="1" fill="#000"/><rect x="8" y="8" width="5" height="1" fill="#000"/></svg>
<div class="t" style="left:62px;top:41px;font-size:12px;line-height:12px;font-family:'Liberation Sans',sans-serif;color:#000;transform:scaleX(0.970);">Vouchers</div>
<div class="a" style="left:30px;top:66px;width:10px;height:1px;background:repeating-linear-gradient(90deg,#909090 0 1px,transparent 1px 2px)"></div>
<svg class="a" style="left:41px;top:59px;" width="16" height="12" viewBox="0 0 16 12"><rect x=".5" y=".5" width="14" height="10" fill="#fff" stroke="#000"/><rect x="15" y="1" width="1" height="11" fill="#444"/><rect x="1" y="11" width="15" height="1" fill="#444"/><rect x="2" y="2" width="5" height="7" fill="#000"/><rect x="3" y="3" width="3" height="5" fill="#30d8e8"/><path d="M3 3.5 L6 7.5" stroke="#e02020" stroke-width="1.2"/><rect x="3" y="6" width="2" height="2" fill="#f0e020"/><rect x="8" y="2" width="5" height="1" fill="#000"/><rect x="8" y="4" width="5" height="1" fill="#000"/><rect x="8" y="6" width="5" height="1" fill="#000"/><rect x="8" y="8" width="5" height="1" fill="#000"/></svg>
<div class="t" style="left:62px;top:59px;font-size:12px;line-height:12px;font-family:'Liberation Sans',sans-serif;color:#000;transform:scaleX(0.900);">OUR POLICY</div>
<div class="a" style="left:30px;top:84px;width:10px;height:1px;background:repeating-linear-gradient(90deg,#909090 0 1px,transparent 1px 2px)"></div>
<svg class="a" style="left:41px;top:77px;" width="16" height="12" viewBox="0 0 16 12"><rect x=".5" y=".5" width="14" height="10" fill="#fff" stroke="#000"/><rect x="15" y="1" width="1" height="11" fill="#444"/><rect x="1" y="11" width="15" height="1" fill="#444"/><rect x="2" y="2" width="5" height="7" fill="#000"/><rect x="3" y="3" width="3" height="5" fill="#30d8e8"/><path d="M3 3.5 L6 7.5" stroke="#e02020" stroke-width="1.2"/><rect x="3" y="6" width="2" height="2" fill="#f0e020"/><rect x="8" y="2" width="5" height="1" fill="#000"/><rect x="8" y="4" width="5" height="1" fill="#000"/><rect x="8" y="6" width="5" height="1" fill="#000"/><rect x="8" y="8" width="5" height="1" fill="#000"/></svg>
<div class="t" style="left:62px;top:77px;font-size:12px;line-height:12px;font-family:'Liberation Sans',sans-serif;color:#000;">About Inchs</div>
<div class="a" style="left:11px;top:102px;width:10px;height:1px;background:repeating-linear-gradient(90deg,#909090 0 1px,transparent 1px 2px)"></div>
<div class="a" style="left:7px;top:98px;width:9px;height:9px;border:1px solid #9a9a9a;background:linear-gradient(#fff,#e0e0e0)"></div>
<div class="a" style="left:9px;top:102px;width:5px;height:1px;background:#3a4aa0"></div>
<svg class="a" style="left:23px;top:94px;" width="14" height="15" viewBox="0 0 14 15"><rect x=".5" y=".5" width="12" height="13" fill="#fff" stroke="#000"/><rect x="13" y="1" width="1" height="14" fill="#999"/><path d="M3 3.5h7M3 5.5h7M3 7.5h7M3 9.5h7" stroke="#333"/></svg>
<div class="t" style="left:43px;top:95px;font-size:12px;line-height:12px;font-family:'Liberation Sans',sans-serif;color:#000;transform:scaleX(0.960);">Contact Inchs</div>
<div class="a" style="left:30px;top:120px;width:10px;height:1px;background:repeating-linear-gradient(90deg,#909090 0 1px,transparent 1px 2px)"></div>
<svg class="a" style="left:41px;top:113px;" width="16" height="12" viewBox="0 0 16 12"><rect x=".5" y=".5" width="14" height="10" fill="#fff" stroke="#000"/><rect x="15" y="1" width="1" height="11" fill="#444"/><rect x="1" y="11" width="15" height="1" fill="#444"/><rect x="2" y="2" width="5" height="7" fill="#000"/><rect x="3" y="3" width="3" height="5" fill="#30d8e8"/><path d="M3 3.5 L6 7.5" stroke="#e02020" stroke-width="1.2"/><rect x="3" y="6" width="2" height="2" fill="#f0e020"/><rect x="8" y="2" width="5" height="1" fill="#000"/><rect x="8" y="4" width="5" height="1" fill="#000"/><rect x="8" y="6" width="5" height="1" fill="#000"/><rect x="8" y="8" width="5" height="1" fill="#000"/></svg>
<div class="t" style="left:62px;top:113px;font-size:12px;line-height:12px;font-family:'Liberation Sans',sans-serif;color:#000;transform:scaleX(0.977);">Contact Details</div>
<div class="a" style="left:11px;top:138px;width:10px;height:1px;background:repeating-linear-gradient(90deg,#909090 0 1px,transparent 1px 2px)"></div>
<svg class="a" style="left:23px;top:131px;" width="15" height="15" viewBox="0 0 15 15"><rect x="1.5" y="1" width="12" height="12" fill="#fff" stroke="#000" stroke-width="1.6"/><path d="M2 1 L13 13 M13 1 L2 13" stroke="#f00000" stroke-width="2.6"/></svg>
<div class="t" style="left:43px;top:131px;font-size:12px;line-height:12px;font-family:'Liberation Sans',sans-serif;color:#8a8a8a;transform:scaleX(0.969);">test page</div>
<div class="a" style="left:11px;top:156px;width:10px;height:1px;background:repeating-linear-gradient(90deg,#909090 0 1px,transparent 1px 2px)"></div>
<div class="a" style="left:7px;top:152px;width:9px;height:9px;border:1px solid #9a9a9a;background:linear-gradient(#fff,#e0e0e0)"></div>
<div class="a" style="left:9px;top:156px;width:5px;height:1px;background:#3a4aa0"></div>
<svg class="a" style="left:23px;top:148px;" width="15" height="16" viewBox="0 0 15 16"><path d="M0 8 L8 0 L14 5 L6 13z" fill="#108a10"/><path d="M0 8 L6 13 L6 15 L0 10z" fill="#0a6a0a"/><path d="M6 13 L14 5 L14 7 L6 15z" fill="#909090"/><path d="M4 7 L9 3 L11 5 L6 9z" fill="#fff"/><path d="M5 6.5 Q7 4 8.5 5.5 Q7 7 9 8" stroke="#f0f" stroke-width="1.2" fill="none"/><path d="M6 4 L9 2" stroke="#2040ff" stroke-width="1.6"/></svg>
<div class="a" style="left:41px;top:147px;width:111px;height:18px;background:#3399ff"></div>
<div class="t" style="left:43px;top:149px;font-size:12px;line-height:12px;font-family:'Liberation Sans',sans-serif;color:#fff;transform:scaleX(0.988);">Online Catalogue -</div>
<div class="a" style="left:30px;top:174px;width:10px;height:1px;background:repeating-linear-gradient(90deg,#909090 0 1px,transparent 1px 2px)"></div>
<svg class="a" style="left:42px;top:167px;" width="15" height="15" viewBox="0 0 15 15"><rect x="1.5" y="1" width="12" height="12" fill="#fff" stroke="#000" stroke-width="1.6"/><path d="M2 1 L13 13 M13 1 L2 13" stroke="#f00000" stroke-width="2.6"/></svg>
<div class="t" style="left:62px;top:167px;font-size:12px;line-height:12px;font-family:'Liberation Sans',sans-serif;color:#8a8a8a;transform:scaleX(0.960);">Home Page</div>
<div class="a" style="left:30px;top:192px;width:10px;height:1px;background:repeating-linear-gradient(90deg,#909090 0 1px,transparent 1px 2px)"></div>
<div class="a" style="left:26px;top:188px;width:9px;height:9px;border:1px solid #9a9a9a;background:linear-gradient(#fff,#e0e0e0)"></div>
<div class="a" style="left:28px;top:192px;width:5px;height:1px;background:#3a4aa0"></div>
<svg class="a" style="left:42px;top:183px;" width="14" height="16" viewBox="0 0 14 16"><rect x=".5" y=".5" width="12" height="14" fill="#fff" stroke="#000"/><rect x="13" y="1" width="1" height="15" fill="#222"/><rect x="1" y="15" width="13" height="1" fill="#222"/><rect x="2" y="2" width="3" height="3" fill="#108070"/><rect x="2" y="7" width="3" height="3" fill="#f00"/><path d="M6 2.5h5M6 4.5h5M6 7.5h5M6 9.5h5" stroke="#555" stroke-width="1"/><rect x="9" y="5" width="3" height="1" fill="#000"/><rect x="9" y="10" width="3" height="1" fill="#000"/><rect x="9" y="12" width="3" height="1" fill="#000"/><path d="M2 12.5h6" stroke="#bbb" stroke-dasharray="1 1"/></svg>
<div class="t" style="left:62px;top:185px;font-size:12px;line-height:12px;font-family:'Liberation Sans',sans-serif;color:#000;transform:scaleX(0.960);">Ladieswear</div>
<div class="a" style="left:49px;top:210px;width:10px;height:1px;background:repeating-linear-gradient(90deg,#909090 0 1px,transparent 1px 2px)"></div>
<div class="a" style="left:45px;top:206px;width:9px;height:9px;border:1px solid #9a9a9a;background:linear-gradient(#fff,#e0e0e0)"></div>
<div class="a" style="left:47px;top:210px;width:5px;height:1px;background:#3a4aa0"></div>
<div class="a" style="left:49px;top:208px;width:1px;height:5px;background:#3a4aa0"></div>
<svg class="a" style="left:61px;top:201px;" width="14" height="16" viewBox="0 0 14 16"><rect x=".5" y=".5" width="12" height="14" fill="#fff" stroke="#000"/><rect x="13" y="1" width="1" height="15" fill="#222"/><rect x="1" y="15" width="13" height="1" fill="#222"/><rect x="2" y="2" width="3" height="3" fill="#108070"/><rect x="2" y="7" width="3" height="3" fill="#f00"/><path d="M6 2.5h5M6 4.5h5M6 7.5h5M6 9.5h5" stroke="#555" stroke-width="1"/><rect x="9" y="5" width="3" height="1" fill="#000"/><rect x="9" y="10" width="3" height="1" fill="#000"/><rect x="9" y="12" width="3" height="1" fill="#000"/><path d="M2 12.5h6" stroke="#bbb" stroke-dasharray="1 1"/></svg>
<div class="t" style="left:81px;top:203px;font-size:12px;line-height:12px;font-family:'Liberation Sans',sans-serif;color:#000;transform:scaleX(0.960);">Cavallo Breeches</div>
<div class="a" style="left:49px;top:228px;width:10px;height:1px;background:repeating-linear-gradient(90deg,#909090 0 1px,transparent 1px 2px)"></div>
<div class="a" style="left:45px;top:224px;width:9px;height:9px;border:1px solid #9a9a9a;background:linear-gradient(#fff,#e0e0e0)"></div>
<div class="a" style="left:47px;top:228px;width:5px;height:1px;background:#3a4aa0"></div>
<div class="a" style="left:49px;top:226px;width:1px;height:5px;background:#3a4aa0"></div>
<svg class="a" style="left:61px;top:219px;" width="14" height="16" viewBox="0 0 14 16"><rect x=".5" y=".5" width="12" height="14" fill="#fff" stroke="#000"/><rect x="13" y="1" width="1" height="15" fill="#222"/><rect x="1" y="15" width="13" height="1" fill="#222"/><rect x="2" y="2" width="3" height="3" fill="#108070"/><rect x="2" y="7" width="3" height="3" fill="#f00"/><path d="M6 2.5h5M6 4.5h5M6 7.5h5M6 9.5h5" stroke="#555" stroke-width="1"/><rect x="9" y="5" width="3" height="1" fill="#000"/><rect x="9" y="10" width="3" height="1" fill="#000"/><rect x="9" y="12" width="3" height="1" fill="#000"/><path d="M2 12.5h6" stroke="#bbb" stroke-dasharray="1 1"/></svg>
<div class="t" style="left:81px;top:221px;font-size:12px;line-height:12px;font-family:'Liberation Sans',sans-serif;color:#000;transform:scaleX(0.960);">Breeches</div>
<div class="a" style="left:49px;top:246px;width:10px;height:1px;background:repeating-linear-gradient(90deg,#909090 0 1px,transparent 1px 2px)"></div>
<div class="a" style="left:45px;top:242px;width:9px;height:9px;border:1px solid #9a9a9a;background:linear-gradient(#fff,#e0e0e0)"></div>
<div class="a" style="left:47px;top:246px;width:5px;height:1px;background:#3a4aa0"></div>
<div class="a" style="left:49px;top:244px;width:1px;height:5px;background:#3a4aa0"></div>
<svg class="a" style="left:61px;top:237px;" width="14" height="16" viewBox="0 0 14 16"><rect x=".5" y=".5" width="12" height="14" fill="#fff" stroke="#000"/><rect x="13" y="1" width="1" height="15" fill="#222"/><rect x="1" y="15" width="13" height="1" fill="#222"/><rect x="2" y="2" width="3" height="3" fill="#108070"/><rect x="2" y="7" width="3" height="3" fill="#f00"/><path d="M6 2.5h5M6 4.5h5M6 7.5h5M6 9.5h5" stroke="#555" stroke-width="1"/><rect x="9" y="5" width="3" height="1" fill="#000"/><rect x="9" y="10" width="3" height="1" fill="#000"/><rect x="9" y="12" width="3" height="1" fill="#000"/><path d="M2 12.5h6" stroke="#bbb" stroke-dasharray="1 1"/></svg>
<div class="t" style="left:81px;top:239px;font-size:12px;line-height:12px;font-family:'Liberation Sans',sans-serif;color:#000;transform:scaleX(0.960);">Socks</div>
<div class="a" style="left:30px;top:264px;width:10px;height:1px;background:repeating-linear-gradient(90deg,#909090 0 1px,transparent 1px 2px)"></div>
<div class="a" style="left:26px;top:260px;width:9px;height:9px;border:1px solid #9a9a9a;background:linear-gradient(#fff,#e0e0e0)"></div>
<div class="a" style="left:28px;top:264px;width:5px;height:1px;background:#3a4aa0"></div>
<svg class="a" style="left:42px;top:255px;" width="14" height="16" viewBox="0 0 14 16"><rect x=".5" y=".5" width="12" height="14" fill="#fff" stroke="#000"/><rect x="13" y="1" width="1" height="15" fill="#222"/><rect x="1" y="15" width="13" height="1" fill="#222"/><rect x="2" y="2" width="3" height="3" fill="#108070"/><rect x="2" y="7" width="3" height="3" fill="#f00"/><path d="M6 2.5h5M6 4.5h5M6 7.5h5M6 9.5h5" stroke="#555" stroke-width="1"/><rect x="9" y="5" width="3" height="1" fill="#000"/><rect x="9" y="10" width="3" height="1" fill="#000"/><rect x="9" y="12" width="3" height="1" fill="#000"/><path d="M2 12.5h6" stroke="#bbb" stroke-dasharray="1 1"/></svg>
<div class="t" style="left:62px;top:257px;font-size:12px;line-height:12px;font-family:'Liberation Sans',sans-serif;color:#000;transform:scaleX(0.960);">Menswear</div>
<div class="a" style="left:49px;top:282px;width:10px;height:1px;background:repeating-linear-gradient(90deg,#909090 0 1px,transparent 1px 2px)"></div>
<svg class="a" style="left:61px;top:273px;" width="14" height="16" viewBox="0 0 14 16"><rect x="0" y="0" width="13" height="15" fill="#fff"/><rect x="0" y="0" width="1" height="1"/><rect x="0" y="14" width="1" height="1"/><rect x="2" y="0" width="1" height="1"/><rect x="2" y="14" width="1" height="1"/><rect x="4" y="0" width="1" height="1"/><rect x="4" y="14" width="1" height="1"/><rect x="6" y="0" width="1" height="1"/><rect x="6" y="14" width="1" height="1"/><rect x="8" y="0" width="1" height="1"/><rect x="8" y="14" width="1" height="1"/><rect x="10" y="0" width="1" height="1"/><rect x="10" y="14" width="1" height="1"/><rect x="12" y="0" width="1" height="1"/><rect x="12" y="14" width="1" height="1"/><rect x="0" y="0" width="1" height="1"/><rect x="12" y="0" width="1" height="1"/><rect x="0" y="2" width="1" height="1"/><rect x="12" y="2" width="1" height="1"/><rect x="0" y="4" width="1" height="1"/><rect x="12" y="4" width="1" height="1"/><rect x="0" y="6" width="1" height="1"/><rect x="12" y="6" width="1" height="1"/><rect x="0" y="8" width="1" height="1"/><rect x="12" y="8" width="1" height="1"/><rect x="0" y="10" width="1" height="1"/><rect x="12" y="10" width="1" height="1"/><rect x="0" y="12" width="1" height="1"/><rect x="12" y="12" width="1" height="1"/><rect x="0" y="14" width="1" height="1"/><rect x="12" y="14" width="1" height="1"/><path d="M3.5 2 L5 3.5 L3.5 5 L2 3.5z" fill="none" stroke="#108070"/><path d="M3.5 7 L5 8.5 L3.5 10 L2 8.5z" fill="none" stroke="#f00"/><rect x="7" y="3" width="1" height="1" fill="#888"/><rect x="9" y="3" width="1" height="1" fill="#888"/><rect x="7" y="8" width="1" height="1" fill="#888"/><rect x="9" y="8" width="1" height="1" fill="#888"/><rect x="10" y="5" width="1" height="1"/><rect x="10" y="11" width="1" height="1"/></svg>
<div class="t" style="left:81px;top:275px;font-size:12px;line-height:12px;font-family:'Liberation Sans',sans-serif;color:#000;">Competition Wear</div>
<div class="a" style="left:49px;top:300px;width:10px;height:1px;background:repeating-linear-gradient(90deg,#909090 0 1px,transparent 1px 2px)"></div>
<div class="a" style="left:45px;top:296px;width:9px;height:9px;border:1px solid #9a9a9a;background:linear-gradient(#fff,#e0e0e0)"></div>
<div class="a" style="left:47px;top:300px;width:5px;height:1px;background:#3a4aa0"></div>
<div class="a" style="left:49px;top:298px;width:1px;height:5px;background:#3a4aa0"></div>
<svg class="a" style="left:61px;top:291px;" width="14" height="16" viewBox="0 0 14 16"><rect x=".5" y=".5" width="12" height="14" fill="#fff" stroke="#000"/><rect x="13" y="1" width="1" height="15" fill="#222"/><rect x="1" y="15" width="13" height="1" fill="#222"/><rect x="2" y="2" width="3" height="3" fill="#108070"/><rect x="2" y="7" width="3" height="3" fill="#f00"/><path d="M6 2.5h5M6 4.5h5M6 7.5h5M6 9.5h5" stroke="#555" stroke-width="1"/><rect x="9" y="5" width="3" height="1" fill="#000"/><rect x="9" y="10" width="3" height="1" fill="#000"/><rect x="9" y="12" width="3" height="1" fill="#000"/><path d="M2 12.5h6" stroke="#bbb" stroke-dasharray="1 1"/></svg>
<div class="t" style="left:81px;top:293px;font-size:12px;line-height:12px;font-family:'Liberation Sans',sans-serif;color:#000;transform:scaleX(0.960);">Breeches</div>
<div class="a" style="left:49px;top:318px;width:10px;height:1px;background:repeating-linear-gradient(90deg,#909090 0 1px,transparent 1px 2px)"></div>
<div class="a" style="left:45px;top:314px;width:9px;height:9px;border:1px solid #9a9a9a;background:linear-gradient(#fff,#e0e0e0)"></div>
<div class="a" style="left:47px;top:318px;width:5px;height:1px;background:#3a4aa0"></div>
<div class="a" style="left:49px;top:316px;width:1px;height:5px;background:#3a4aa0"></div>
<svg class="a" style="left:61px;top:309px;" width="14" height="16" viewBox="0 0 14 16"><rect x=".5" y=".5" width="12" height="14" fill="#fff" stroke="#000"/><rect x="13" y="1" width="1" height="15" fill="#222"/><rect x="1" y="15" width="13" height="1" fill="#222"/><rect x="2" y="2" width="3" height="3" fill="#108070"/><rect x="2" y="7" width="3" height="3" fill="#f00"/><path d="M6 2.5h5M6 4.5h5M6 7.5h5M6 9.5h5" stroke="#555" stroke-width="1"/><rect x="9" y="5" width="3" height="1" fill="#000"/><rect x="9" y="10" width="3" height="1" fill="#000"/><rect x="9" y="12" width="3" height="1" fill="#000"/><path d="M2 12.5h6" stroke="#bbb" stroke-dasharray="1 1"/></svg>
<div class="t" style="left:81px;top:311px;font-size:12px;line-height:12px;font-family:'Liberation Sans',sans-serif;color:#000;transform:scaleX(0.960);">Men's Socks</div>
<div class="a" style="left:49px;top:336px;width:10px;height:1px;background:repeating-linear-gradient(90deg,#909090 0 1px,transparent 1px 2px)"></div>
<div class="a" style="left:45px;top:332px;width:9px;height:9px;border:1px solid #9a9a9a;background:linear-gradient(#fff,#e0e0e0)"></div>
<div class="a" style="left:47px;top:336px;width:5px;height:1px;background:#3a4aa0"></div>
<div class="a" style="left:49px;top:334px;width:1px;height:5px;background:#3a4aa0"></div>
<svg class="a" style="left:61px;top:327px;" width="14" height="16" viewBox="0 0 14 16"><rect x=".5" y=".5" width="12" height="14" fill="#fff" stroke="#000"/><rect x="13" y="1" width="1" height="15" fill="#222"/><rect x="1" y="15" width="13" height="1" fill="#222"/><rect x="2" y="2" width="3" height="3" fill="#108070"/><rect x="2" y="7" width="3" height="3" fill="#f00"/><path d="M6 2.5h5M6 4.5h5M6 7.5h5M6 9.5h5" stroke="#555" stroke-width="1"/><rect x="9" y="5" width="3" height="1" fill="#000"/><rect x="9" y="10" width="3" height="1" fill="#000"/><rect x="9" y="12" width="3" height="1" fill="#000"/><path d="M2 12.5h6" stroke="#bbb" stroke-dasharray="1 1"/></svg>
<div class="t" style="left:81px;top:329px;font-size:12px;line-height:12px;font-family:'Liberation Sans',sans-serif;color:#000;transform:scaleX(0.960);">Gloves</div>
<div class="a" style="left:30px;top:354px;width:10px;height:1px;background:repeating-linear-gradient(90deg,#909090 0 1px,transparent 1px 2px)"></div>
<div class="a" style="left:26px;top:350px;width:9px;height:9px;border:1px solid #9a9a9a;background:linear-gradient(#fff,#e0e0e0)"></div>
<div class="a" style="left:28px;top:354px;width:5px;height:1px;background:#3a4aa0"></div>
<div class="a" style="left:30px;top:352px;width:1px;height:5px;background:#3a4aa0"></div>
<svg class="a" style="left:42px;top:345px;" width="14" height="16" viewBox="0 0 14 16"><rect x=".5" y=".5" width="12" height="14" fill="#fff" stroke="#000"/><rect x="13" y="1" width="1" height="15" fill="#222"/><rect x="1" y="15" width="13" height="1" fill="#222"/><rect x="2" y="2" width="3" height="3" fill="#108070"/><rect x="2" y="7" width="3" height="3" fill="#f00"/><path d="M6 2.5h5M6 4.5h5M6 7.5h5M6 9.5h5" stroke="#555" stroke-width="1"/><rect x="9" y="5" width="3" height="1" fill="#000"/><rect x="9" y="10" width="3" height="1" fill="#000"/><rect x="9" y="12" width="3" height="1" fill="#000"/><path d="M2 12.5h6" stroke="#bbb" stroke-dasharray="1 1"/></svg>
<div class="t" style="left:62px;top:347px;font-size:12px;line-height:12px;font-family:'Liberation Sans',sans-serif;color:#000;">Competition Wear</div>
<div class="a" style="left:30px;top:372px;width:10px;height:1px;background:repeating-linear-gradient(90deg,#909090 0 1px,transparent 1px 2px)"></div>
<div class="a" style="left:26px;top:368px;width:9px;height:9px;border:1px solid #9a9a9a;background:linear-gradient(#fff,#e0e0e0)"></div>
<div class="a" style="left:28px;top:372px;width:5px;height:1px;background:#3a4aa0"></div>
<div class="a" style="left:30px;top:370px;width:1px;height:5px;background:#3a4aa0"></div>
<svg class="a" style="left:42px;top:363px;" width="14" height="16" viewBox="0 0 14 16"><rect x=".5" y=".5" width="12" height="14" fill="#fff" stroke="#000"/><rect x="13" y="1" width="1" height="15" fill="#222"/><rect x="1" y="15" width="13" height="1" fill="#222"/><rect x="2" y="2" width="3" height="3" fill="#108070"/><rect x="2" y="7" width="3" height="3" fill="#f00"/><path d="M6 2.5h5M6 4.5h5M6 7.5h5M6 9.5h5" stroke="#555" stroke-width="1"/><rect x="9" y="5" width="3" height="1" fill="#000"/><rect x="9" y="10" width="3" height="1" fill="#000"/><rect x="9" y="12" width="3" height="1" fill="#000"/><path d="M2 12.5h6" stroke="#bbb" stroke-dasharray="1 1"/></svg>
<div class="t" style="left:62px;top:365px;font-size:12px;line-height:12px;font-family:'Liberation Sans',sans-serif;color:#000;transform:scaleX(0.990);">Children</div>
<div class="a" style="left:30px;top:390px;width:10px;height:1px;background:repeating-linear-gradient(90deg,#909090 0 1px,transparent 1px 2px)"></div>
<div class="a" style="left:26px;top:386px;width:9px;height:9px;border:1px solid #9a9a9a;background:linear-gradient(#fff,#e0e0e0)"></div>
<div class="a" style="left:28px;top:390px;width:5px;height:1px;background:#3a4aa0"></div>
<div class="a" style="left:30px;top:388px;width:1px;height:5px;background:#3a4aa0"></div>
<svg class="a" style="left:42px;top:381px;" width="14" height="16" viewBox="0 0 14 16"><rect x=".5" y=".5" width="12" height="14" fill="#fff" stroke="#000"/><rect x="13" y="1" width="1" height="15" fill="#222"/><rect x="1" y="15" width="13" height="1" fill="#222"/><rect x="2" y="2" width="3" height="3" fill="#108070"/><rect x="2" y="7" width="3" height="3" fill="#f00"/><path d="M6 2.5h5M6 4.5h5M6 7.5h5M6 9.5h5" stroke="#555" stroke-width="1"/><rect x="9" y="5" width="3" height="1" fill="#000"/><rect x="9" y="10" width="3" height="1" fill="#000"/><rect x="9" y="12" width="3" height="1" fill="#000"/><path d="M2 12.5h6" stroke="#bbb" stroke-dasharray="1 1"/></svg>
<div class="t" style="left:62px;top:383px;font-size:12px;line-height:12px;font-family:'Liberation Sans',sans-serif;color:#000;transform:scaleX(0.960);">Bridles, Browbands,Reins, Girths &amp; Head Collars</div>
<div class="a" style="left:30px;top:408px;width:10px;height:1px;background:repeating-linear-gradient(90deg,#909090 0 1px,transparent 1px 2px)"></div>
<div class="a" style="left:26px;top:404px;width:9px;height:9px;border:1px solid #9a9a9a;background:linear-gradient(#fff,#e0e0e0)"></div>
<div class="a" style="left:28px;top:408px;width:5px;height:1px;background:#3a4aa0"></div>
<div class="a" style="left:30px;top:406px;width:1px;height:5px;background:#3a4aa0"></div>
<svg class="a" style="left:42px;top:399px;" width="14" height="16" viewBox="0 0 14 16"><rect x=".5" y=".5" width="12" height="14" fill="#fff" stroke="#000"/><rect x="13" y="1" width="1" height="15" fill="#222"/><rect x="1" y="15" width="13" height="1" fill="#222"/><rect x="2" y="2" width="3" height="3" fill="#108070"/><rect x="2" y="7" width="3" height="3" fill="#f00"/><path d="M6 2.5h5M6 4.5h5M6 7.5h5M6 9.5h5" stroke="#555" stroke-width="1"/><rect x="9" y="5" width="3" height="1" fill="#000"/><rect x="9" y="10" width="3" height="1" fill="#000"/><rect x="9" y="12" width="3" height="1" fill="#000"/><path d="M2 12.5h6" stroke="#bbb" stroke-dasharray="1 1"/></svg>
<div class="t" style="left:62px;top:401px;font-size:12px;line-height:12px;font-family:'Liberation Sans',sans-serif;color:#000;transform:scaleX(0.964);">Bits - Neue Schule</div>
<div class="a" style="left:30px;top:426px;width:10px;height:1px;background:repeating-linear-gradient(90deg,#909090 0 1px,transparent 1px 2px)"></div>
<div class="a" style="left:26px;top:422px;width:9px;height:9px;border:1px solid #9a9a9a;background:linear-gradient(#fff,#e0e0e0)"></div>
<div class="a" style="left:28px;top:426px;width:5px;height:1px;background:#3a4aa0"></div>
<div class="a" style="left:30px;top:424px;width:1px;height:5px;background:#3a4aa0"></div>
<svg class="a" style="left:42px;top:417px;" width="14" height="16" viewBox="0 0 14 16"><rect x=".5" y=".5" width="12" height="14" fill="#fff" stroke="#000"/><rect x="13" y="1" width="1" height="15" fill="#222"/><rect x="1" y="15" width="13" height="1" fill="#222"/><rect x="2" y="2" width="3" height="3" fill="#108070"/><rect x="2" y="7" width="3" height="3" fill="#f00"/><path d="M6 2.5h5M6 4.5h5M6 7.5h5M6 9.5h5" stroke="#555" stroke-width="1"/><rect x="9" y="5" width="3" height="1" fill="#000"/><rect x="9" y="10" width="3" height="1" fill="#000"/><rect x="9" y="12" width="3" height="1" fill="#000"/><path d="M2 12.5h6" stroke="#bbb" stroke-dasharray="1 1"/></svg>
<div class="t" style="left:62px;top:419px;font-size:12px;line-height:12px;font-family:'Liberation Sans',sans-serif;color:#000;transform:scaleX(0.934);">Spurs and Straps</div>
<div class="a" style="left:30px;top:444px;width:10px;height:1px;background:repeating-linear-gradient(90deg,#909090 0 1px,transparent 1px 2px)"></div>
<div class="a" style="left:26px;top:440px;width:9px;height:9px;border:1px solid #9a9a9a;background:linear-gradient(#fff,#e0e0e0)"></div>
<div class="a" style="left:28px;top:444px;width:5px;height:1px;background:#3a4aa0"></div>
<div class="a" style="left:30px;top:442px;width:1px;height:5px;background:#3a4aa0"></div>
<svg class="a" style="left:42px;top:435px;" width="14" height="16" viewBox="0 0 14 16"><rect x=".5" y=".5" width="12" height="14" fill="#fff" stroke="#000"/><rect x="13" y="1" width="1" height="15" fill="#222"/><rect x="1" y="15" width="13" height="1" fill="#222"/><rect x="2" y="2" width="3" height="3" fill="#108070"/><rect x="2" y="7" width="3" height="3" fill="#f00"/><path d="M6 2.5h5M6 4.5h5M6 7.5h5M6 9.5h5" stroke="#555" stroke-width="1"/><rect x="9" y="5" width="3" height="1" fill="#000"/><rect x="9" y="10" width="3" height="1" fill="#000"/><rect x="9" y="12" width="3" height="1" fill="#000"/><path d="M2 12.5h6" stroke="#bbb" stroke-dasharray="1 1"/></svg>
<div class="t" style="left:62px;top:437px;font-size:12px;line-height:12px;font-family:'Liberation Sans',sans-serif;color:#000;transform:scaleX(0.931);">Squares Pads and Bandages</div>
<div class="a" style="left:30px;top:462px;width:10px;height:1px;background:repeating-linear-gradient(90deg,#909090 0 1px,transparent 1px 2px)"></div>
<div class="a" style="left:26px;top:458px;width:9px;height:9px;border:1px solid #9a9a9a;background:linear-gradient(#fff,#e0e0e0)"></div>
<div class="a" style="left:28px;top:462px;width:5px;height:1px;background:#3a4aa0"></div>
<div class="a" style="left:30px;top:460px;width:1px;height:5px;background:#3a4aa0"></div>
<svg class="a" style="left:42px;top:453px;" width="14" height="16" viewBox="0 0 14 16"><rect x=".5" y=".5" width="12" height="14" fill="#fff" stroke="#000"/><rect x="13" y="1" width="1" height="15" fill="#222"/><rect x="1" y="15" width="13" height="1" fill="#222"/><rect x="2" y="2" width="3" height="3" fill="#108070"/><rect x="2" y="7" width="3" height="3" fill="#f00"/><path d="M6 2.5h5M6 4.5h5M6 7.5h5M6 9.5h5" stroke="#555" stroke-width="1"/><rect x="9" y="5" width="3" height="1" fill="#000"/><rect x="9" y="10" width="3" height="1" fill="#000"/><rect x="9" y="12" width="3" height="1" fill="#000"/><path d="M2 12.5h6" stroke="#bbb" stroke-dasharray="1 1"/></svg>
<div class="t" style="left:62px;top:455px;font-size:12px;line-height:12px;font-family:'Liberation Sans',sans-serif;color:#000;transform:scaleX(0.960);">Horse Boots</div>
<div class="a" style="left:30px;top:480px;width:10px;height:1px;background:repeating-linear-gradient(90deg,#909090 0 1px,transparent 1px 2px)"></div>
<div class="a" style="left:26px;top:476px;width:9px;height:9px;border:1px solid #9a9a9a;background:linear-gradient(#fff,#e0e0e0)"></div>
<div class="a" style="left:28px;top:480px;width:5px;height:1px;background:#3a4aa0"></div>
<div class="a" style="left:30px;top:478px;width:1px;height:5px;background:#3a4aa0"></div>
<svg class="a" style="left:42px;top:471px;" width="14" height="16" viewBox="0 0 14 16"><rect x=".5" y=".5" width="12" height="14" fill="#fff" stroke="#000"/><rect x="13" y="1" width="1" height="15" fill="#222"/><rect x="1" y="15" width="13" height="1" fill="#222"/><rect x="2" y="2" width="3" height="3" fill="#108070"/><rect x="2" y="7" width="3" height="3" fill="#f00"/><path d="M6 2.5h5M6 4.5h5M6 7.5h5M6 9.5h5" stroke="#555" stroke-width="1"/><rect x="9" y="5" width="3" height="1" fill="#000"/><rect x="9" y="10" width="3" height="1" fill="#000"/><rect x="9" y="12" width="3" height="1" fill="#000"/><path d="M2 12.5h6" stroke="#bbb" stroke-dasharray="1 1"/></svg>
<div class="t" style="left:62px;top:473px;font-size:12px;line-height:12px;font-family:'Liberation Sans',sans-serif;color:#000;transform:scaleX(0.990);">Ariat</div>
<div class="a" style="left:30px;top:498px;width:10px;height:1px;background:repeating-linear-gradient(90deg,#909090 0 1px,transparent 1px 2px)"></div>
<div class="a" style="left:26px;top:494px;width:9px;height:9px;border:1px solid #9a9a9a;background:linear-gradient(#fff,#e0e0e0)"></div>
<div class="a" style="left:28px;top:498px;width:5px;height:1px;background:#3a4aa0"></div>
<div class="a" style="left:30px;top:496px;width:1px;height:5px;background:#3a4aa0"></div>
<svg class="a" style="left:42px;top:489px;" width="14" height="16" viewBox="0 0 14 16"><rect x=".5" y=".5" width="12" height="14" fill="#fff" stroke="#000"/><rect x="13" y="1" width="1" height="15" fill="#222"/><rect x="1" y="15" width="13" height="1" fill="#222"/><rect x="2" y="2" width="3" height="3" fill="#108070"/><rect x="2" y="7" width="3" height="3" fill="#f00"/><path d="M6 2.5h5M6 4.5h5M6 7.5h5M6 9.5h5" stroke="#555" stroke-width="1"/><rect x="9" y="5" width="3" height="1" fill="#000"/><rect x="9" y="10" width="3" height="1" fill="#000"/><rect x="9" y="12" width="3" height="1" fill="#000"/><path d="M2 12.5h6" stroke="#bbb" stroke-dasharray="1 1"/></svg>
<div class="t" style="left:62px;top:491px;font-size:12px;line-height:12px;font-family:'Liberation Sans',sans-serif;color:#000;transform:scaleX(0.931);">Accessories</div>
<div class="a" style="left:30px;top:516px;width:10px;height:1px;background:repeating-linear-gradient(90deg,#909090 0 1px,transparent 1px 2px)"></div>
<div class="a" style="left:26px;top:512px;width:9px;height:9px;border:1px solid #9a9a9a;background:linear-gradient(#fff,#e0e0e0)"></div>
<div class="a" style="left:28px;top:516px;width:5px;height:1px;background:#3a4aa0"></div>
<div class="a" style="left:30px;top:514px;width:1px;height:5px;background:#3a4aa0"></div>
<svg class="a" style="left:42px;top:507px;" width="14" height="16" viewBox="0 0 14 16"><rect x=".5" y=".5" width="12" height="14" fill="#fff" stroke="#000"/><rect x="13" y="1" width="1" height="15" fill="#222"/><rect x="1" y="15" width="13" height="1" fill="#222"/><rect x="2" y="2" width="3" height="3" fill="#108070"/><rect x="2" y="7" width="3" height="3" fill="#f00"/><path d="M6 2.5h5M6 4.5h5M6 7.5h5M6 9.5h5" stroke="#555" stroke-width="1"/><rect x="9" y="5" width="3" height="1" fill="#000"/><rect x="9" y="10" width="3" height="1" fill="#000"/><rect x="9" y="12" width="3" height="1" fill="#000"/><path d="M2 12.5h6" stroke="#bbb" stroke-dasharray="1 1"/></svg>
<div class="t" style="left:62px;top:509px;font-size:12px;line-height:12px;font-family:'Liberation Sans',sans-serif;color:#000;transform:scaleX(0.989);">HKM Sport Equipment</div>
<div class="a" style="left:30px;top:534px;width:10px;height:1px;background:repeating-linear-gradient(90deg,#909090 0 1px,transparent 1px 2px)"></div>
<div class="a" style="left:26px;top:530px;width:9px;height:9px;border:1px solid #9a9a9a;background:linear-gradient(#fff,#e0e0e0)"></div>
<div class="a" style="left:28px;top:534px;width:5px;height:1px;background:#3a4aa0"></div>
<div class="a" style="left:30px;top:532px;width:1px;height:5px;background:#3a4aa0"></div>
<svg class="a" style="left:42px;top:525px;" width="14" height="16" viewBox="0 0 14 16"><rect x="0" y="0" width="13" height="15" fill="#fff"/><rect x="0" y="0" width="1" height="1"/><rect x="0" y="14" width="1" height="1"/><rect x="2" y="0" width="1" height="1"/><rect x="2" y="14" width="1" height="1"/><rect x="4" y="0" width="1" height="1"/><rect x="4" y="14" width="1" height="1"/><rect x="6" y="0" width="1" height="1"/><rect x="6" y="14" width="1" height="1"/><rect x="8" y="0" width="1" height="1"/><rect x="8" y="14" width="1" height="1"/><rect x="10" y="0" width="1" height="1"/><rect x="10" y="14" width="1" height="1"/><rect x="12" y="0" width="1" height="1"/><rect x="12" y="14" width="1" height="1"/><rect x="0" y="0" width="1" height="1"/><rect x="12" y="0" width="1" height="1"/><rect x="0" y="2" width="1" height="1"/><rect x="12" y="2" width="1" height="1"/><rect x="0" y="4" width="1" height="1"/><rect x="12" y="4" width="1" height="1"/><rect x="0" y="6" width="1" height="1"/><rect x="12" y="6" width="1" height="1"/><rect x="0" y="8" width="1" height="1"/><rect x="12" y="8" width="1" height="1"/><rect x="0" y="10" width="1" height="1"/><rect x="12" y="10" width="1" height="1"/><rect x="0" y="12" width="1" height="1"/><rect x="12" y="12" width="1" height="1"/><rect x="0" y="14" width="1" height="1"/><rect x="12" y="14" width="1" height="1"/><path d="M3.5 2 L5 3.5 L3.5 5 L2 3.5z" fill="none" stroke="#108070"/><path d="M3.5 7 L5 8.5 L3.5 10 L2 8.5z" fill="none" stroke="#f00"/><rect x="7" y="3" width="1" height="1" fill="#888"/><rect x="9" y="3" width="1" height="1" fill="#888"/><rect x="7" y="8" width="1" height="1" fill="#888"/><rect x="9" y="8" width="1" height="1" fill="#888"/><rect x="10" y="5" width="1" height="1"/><rect x="10" y="11" width="1" height="1"/></svg>
<div class="t" style="left:62px;top:527px;font-size:12px;line-height:12px;font-family:'Liberation Sans',sans-serif;color:#000;transform:scaleX(0.923);">Eskadron</div>
<div class="a" style="left:30px;top:552px;width:10px;height:1px;background:repeating-linear-gradient(90deg,#909090 0 1px,transparent 1px 2px)"></div>
<div class="a" style="left:26px;top:548px;width:9px;height:9px;border:1px solid #9a9a9a;background:linear-gradient(#fff,#e0e0e0)"></div>
<div class="a" style="left:28px;top:552px;width:5px;height:1px;background:#3a4aa0"></div>
<div class="a" style="left:30px;top:550px;width:1px;height:5px;background:#3a4aa0"></div>
<svg class="a" style="left:42px;top:543px;" width="14" height="16" viewBox="0 0 14 16"><rect x=".5" y=".5" width="12" height="14" fill="#fff" stroke="#000"/><rect x="13" y="1" width="1" height="15" fill="#222"/><rect x="1" y="15" width="13" height="1" fill="#222"/><rect x="2" y="2" width="3" height="3" fill="#108070"/><rect x="2" y="7" width="3" height="3" fill="#f00"/><path d="M6 2.5h5M6 4.5h5M6 7.5h5M6 9.5h5" stroke="#555" stroke-width="1"/><rect x="9" y="5" width="3" height="1" fill="#000"/><rect x="9" y="10" width="3" height="1" fill="#000"/><rect x="9" y="12" width="3" height="1" fill="#000"/><path d="M2 12.5h6" stroke="#bbb" stroke-dasharray="1 1"/></svg>
<div class="t" style="left:62px;top:545px;font-size:12px;line-height:12px;font-family:'Liberation Sans',sans-serif;color:#000;transform:scaleX(0.907);">Sale Bridles</div>
<div class="a" style="left:30px;top:570px;width:10px;height:1px;background:repeating-linear-gradient(90deg,#909090 0 1px,transparent 1px 2px)"></div>
<div class="a" style="left:26px;top:566px;width:9px;height:9px;border:1px solid #9a9a9a;background:linear-gradient(#fff,#e0e0e0)"></div>
<div class="a" style="left:28px;top:570px;width:5px;height:1px;background:#3a4aa0"></div>
<div class="a" style="left:30px;top:568px;width:1px;height:5px;background:#3a4aa0"></div>
<svg class="a" style="left:42px;top:561px;" width="14" height="16" viewBox="0 0 14 16"><rect x=".5" y=".5" width="12" height="14" fill="#fff" stroke="#000"/><rect x="13" y="1" width="1" height="15" fill="#222"/><rect x="1" y="15" width="13" height="1" fill="#222"/><rect x="2" y="2" width="3" height="3" fill="#108070"/><rect x="2" y="7" width="3" height="3" fill="#f00"/><path d="M6 2.5h5M6 4.5h5M6 7.5h5M6 9.5h5" stroke="#555" stroke-width="1"/><rect x="9" y="5" width="3" height="1" fill="#000"/><rect x="9" y="10" width="3" height="1" fill="#000"/><rect x="9" y="12" width="3" height="1" fill="#000"/><path d="M2 12.5h6" stroke="#bbb" stroke-dasharray="1 1"/></svg>
<div class="t" style="left:62px;top:563px;font-size:12px;line-height:12px;font-family:'Liberation Sans',sans-serif;color:#000;transform:scaleX(0.950);">Dressage Riding Boots</div>
</div>
<div class="a" style="left:974px;top:1022px;width:246px;height:16px;background:#ececec"></div>
<svg class="a" style="left:979px;top:1026px;" width="4" height="7" viewBox="0 0 4 7"><path d="M4 0 V7 L0 3.5z" fill="#333"/></svg>
<div class="a" style="left:992px;top:1022px;width:161px;height:15px;background:linear-gradient(#f4f4f4,#e2e2e2 50%,#d0d0d0);border:1px solid #9a9a9a;border-radius:2px"></div>
<div class="a" style="left:1069px;top:1026px;width:1px;height:7px;background:#555"></div>
<div class="a" style="left:1071px;top:1026px;width:1px;height:7px;background:#555"></div>
<div class="a" style="left:1073px;top:1026px;width:1px;height:7px;background:#555"></div>
<svg class="a" style="left:1208px;top:1026px;" width="4" height="7" viewBox="0 0 4 7"><path d="M0 0 V7 L4 3.5z" fill="#333"/></svg>
<div class="a" style="left:966px;top:1045px;width:101px;height:23px;background:#fff;border:1px solid #9a9a9a;border-top:none"></div>
<svg class="a" style="left:972px;top:1048px;" width="15" height="15" viewBox="0 0 15 15"><rect x=".5" y=".5" width="13" height="13" fill="#fff" stroke="#000"/><rect x="2" y="3" width="6" height="1" fill="#333"/><rect x="2" y="5" width="6" height="1" fill="#333"/><rect x="2" y="8" width="10" height="1" fill="#333"/><rect x="2" y="10" width="10" height="1" fill="#333"/><rect x="9" y="2" width="3" height="4" fill="#a0d010"/></svg>
<div class="t" style="left:990px;top:1050px;font-size:12px;line-height:12px;font-family:'Liberation Sans',sans-serif;color:#000;transform:scaleX(0.980);">Content Tree</div>
<div class="a" style="left:1066px;top:1045px;width:89px;height:21px;background:linear-gradient(#ececec,#e2e2e2);border:1px solid #9a9a9a;border-left:none"></div>
<svg class="a" style="left:1071px;top:1046px;" width="15" height="15" viewBox="0 0 15 15"><circle cx="7.5" cy="7.5" r="7" fill="#f4dc10" stroke="#6a5a00" stroke-width=".8"/><path d="M7.5 7.5 Q9.5 7 9 5 Q8 3 5.5 4 Q3 5.5 4 8.5 Q5.5 12 9.5 11 Q12.5 9.5 12 6" stroke="#222" stroke-width="1.4" fill="none"/></svg>
<div class="t" style="left:1090px;top:1049px;font-size:12px;line-height:12px;font-family:'Liberation Sans',sans-serif;color:#000;transform:scaleX(0.943);">Design Tree</div>
<div class="a" style="left:18px;top:1072px;width:1216px;height:28px;background:linear-gradient(#fbfcfe 0,#eef0f7 25%,#d8ddec 50%,#d3d9ea 100%)"></div>
<div class="a" style="left:18px;top:1072px;width:1216px;height:1px;background:#7a7a7a"></div>
<div class="a" style="left:22px;top:1076px;width:2px;height:2px;background:#a3acc0"></div>
<div class="a" style="left:22px;top:1080px;width:2px;height:2px;background:#a3acc0"></div>
<div class="a" style="left:22px;top:1084px;width:2px;height:2px;background:#a3acc0"></div>
<div class="a" style="left:22px;top:1088px;width:2px;height:2px;background:#a3acc0"></div>
<div class="a" style="left:22px;top:1092px;width:2px;height:2px;background:#a3acc0"></div>
<svg class="a" style="left:32px;top:1080px;" width="15" height="14" viewBox="0 0 15 14"><path d="M4 .8 H11 L14.3 7 L11 13.2 H4 L.7 7z" fill="#f04aa0" stroke="#4a2a3a" stroke-width="1"/><path d="M7.5 7 L.7 7 M7.5 7 L11 .8 M7.5 7 L11 13.2" stroke="#9a2a60" stroke-width=".8"/></svg>
<div class="t" style="left:50px;top:1082px;font-size:12px;line-height:12px;font-family:'Liberation Sans',sans-serif;color:#000;">Works Best with Hotshot</div>
<div class="t" style="left:188px;top:1083px;font-size:11px;line-height:11px;font-family:'Liberation Sans',sans-serif;color:#000;">&gt;</div>
<svg class="a" style="left:203px;top:1080px;" width="15" height="14" viewBox="0 0 15 14"><path d="M4 .8 H11 L14.3 7 L11 13.2 H4 L.7 7z" fill="#f04aa0" stroke="#4a2a3a" stroke-width="1"/><path d="M7.5 7 L.7 7 M7.5 7 L11 .8 M7.5 7 L11 13.2" stroke="#9a2a60" stroke-width=".8"/></svg>
<div class="t" style="left:221px;top:1082px;font-size:12px;line-height:12px;font-family:'Liberation Sans',sans-serif;color:#000;transform:scaleX(0.989);">Section Page With Section Name At The Top</div>
<div class="t" style="left:465px;top:1083px;font-size:11px;line-height:11px;font-family:'Liberation Sans',sans-serif;color:#000;">&gt;</div>
<svg class="a" style="left:479px;top:1080px;" width="13" height="13" viewBox="0 0 13 13"><rect x=".5" y=".5" width="12" height="12" fill="#fff" stroke="#b02060"/><path d="M4.5 1v11M8.5 1v11M1 4.5h11M1 8.5h11" stroke="#b02060"/></svg>
<div class="t" style="left:497px;top:1082px;font-size:12px;line-height:12px;font-family:'Liberation Sans',sans-serif;color:#000;transform:scaleX(0.966);">Standard Sub Section List</div>
<div class="t" style="left:640px;top:1083px;font-size:11px;line-height:11px;font-family:'Liberation Sans',sans-serif;color:#000;">&gt;</div>
<svg class="a" style="left:654px;top:1080px;" width="15" height="14" viewBox="0 0 15 14"><path d="M4 .8 H11 L14.3 7 L11 13.2 H4 L.7 7z" fill="#f04aa0" stroke="#4a2a3a" stroke-width="1"/><path d="M7.5 7 L.7 7 M7.5 7 L11 .8 M7.5 7 L11 13.2" stroke="#9a2a60" stroke-width=".8"/></svg>
<div class="t" style="left:672px;top:1082px;font-size:12px;line-height:12px;font-family:'Liberation Sans',sans-serif;color:#000;font-weight:bold;transform:scaleX(0.926);">Subpage list</div>
<div class="a" style="left:18px;top:1100px;width:1216px;height:20px;background:#f0f0f0;border-top:1px solid #a0a0a0"></div>
<div class="t" style="left:20px;top:1105px;font-size:12px;line-height:12px;font-family:'Liberation Sans',sans-serif;color:#000;transform:scaleX(0.906);">For Help, press F1</div>
<div class="a" style="left:999px;top:1103px;width:106px;height:17px;border:1px solid #a0a0a0;border-right-color:#fff;border-bottom-color:#fff;box-shadow:inset -1px -1px #d8d8d8"></div>
<div class="a" style="left:1115px;top:1103px;width:29px;height:17px;border:1px solid #a0a0a0;border-right-color:#fff;border-bottom-color:#fff;box-shadow:inset -1px -1px #d8d8d8"></div>
<div class="a" style="left:1146px;top:1103px;width:34px;height:17px;border:1px solid #a0a0a0;border-right-color:#fff;border-bottom-color:#fff;box-shadow:inset -1px -1px #d8d8d8"></div>
<div class="a" style="left:1182px;top:1103px;width:33px;height:17px;border:1px solid #a0a0a0;border-right-color:#fff;border-bottom-color:#fff;box-shadow:inset -1px -1px #d8d8d8"></div>
<div class="t" style="left:1148px;top:1106px;font-size:12px;line-height:12px;font-family:'Liberation Sans',sans-serif;color:#000;transform:scaleX(1.024);">NUM</div>
<div class="a" style="left:1231px;top:1110px;width:2px;height:2px;background:#b0b0b0"></div>
<div class="a" style="left:1228px;top:1113px;width:2px;height:2px;background:#b0b0b0"></div>
<div class="a" style="left:1231px;top:1113px;width:2px;height:2px;background:#b0b0b0"></div>
<div class="a" style="left:1225px;top:1116px;width:2px;height:2px;background:#b0b0b0"></div>
<div class="a" style="left:1228px;top:1116px;width:2px;height:2px;background:#b0b0b0"></div>
<div class="a" style="left:1231px;top:1116px;width:2px;height:2px;background:#b0b0b0"></div>
<svg class="a" style="left:238px;top:1030px;" width="212" height="52" viewBox="0 0 212 52"><ellipse cx="105.5" cy="25.5" rx="102.5" ry="23" fill="none" stroke="#e8101c" stroke-width="2.2" transform="rotate(-1.5 105.5 25.5)"/></svg>
</body></html>
